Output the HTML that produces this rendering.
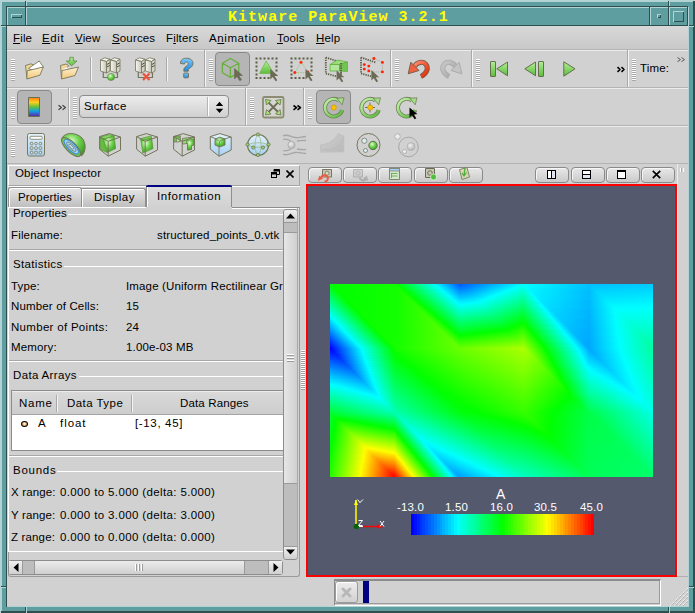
<!DOCTYPE html>
<html><head><meta charset="utf-8">
<style>
*{margin:0;padding:0;box-sizing:border-box}
html,body{width:695px;height:613px;overflow:hidden;background:#5f9ea0}
body{position:relative;font-family:"Liberation Sans",sans-serif;font-size:11.5px;letter-spacing:0.15px;color:#000}
.a{position:absolute}
.lt{background:#b3d2d3}
.dk{background:#2f4f4f}
.tl{background:#5f9ea0}
.t{position:absolute;white-space:nowrap;line-height:1}
.hd{position:absolute;width:4px;background:repeating-linear-gradient(to bottom,#fff 0,#fff 1px,#a8a8a8 1px,#a8a8a8 2px)}
.vs{position:absolute;width:2px;border-left:1px solid #a9a9a9;border-right:1px solid #f4f4f4}
.vb{position:absolute;top:167px;width:34px;height:16px;border:1px solid #8a8a8a;border-radius:4px;background:linear-gradient(#e8e8e8,#cacaca);box-shadow:inset 1px 1px 0 #f6f6f6}
.tb{position:absolute;border:1px solid #8a8a8a;border-radius:4px;background:#b5b5b5}
#fld i{position:absolute;left:0;width:323px;display:block}
</style></head><body>
<!-- window frame -->
<div class="a lt" style="left:0;top:0;width:695px;height:2px"></div>
<div class="a lt" style="left:0;top:0;width:2px;height:613px"></div>
<div class="a dk" style="left:693px;top:1px;width:2px;height:612px"></div>
<div class="a dk" style="left:1px;top:611px;width:694px;height:2px"></div>
<!-- corner separators -->
<div class="a dk" style="left:25px;top:1px;width:1px;height:6px"></div>
<div class="a lt" style="left:26px;top:0;width:1px;height:7px"></div>
<div class="a dk" style="left:668px;top:1px;width:1px;height:6px"></div>
<div class="a lt" style="left:669px;top:0;width:1px;height:7px"></div>
<div class="a dk" style="left:1px;top:25px;width:6px;height:1px"></div>
<div class="a lt" style="left:0;top:26px;width:7px;height:1px"></div>
<div class="a dk" style="left:688px;top:25px;width:6px;height:1px"></div>
<div class="a lt" style="left:688px;top:26px;width:6px;height:1px"></div>
<div class="a dk" style="left:1px;top:586px;width:6px;height:1px"></div>
<div class="a lt" style="left:0;top:587px;width:7px;height:1px"></div>
<div class="a dk" style="left:688px;top:586px;width:6px;height:1px"></div>
<div class="a lt" style="left:688px;top:587px;width:6px;height:1px"></div>
<div class="a dk" style="left:25px;top:606px;width:1px;height:6px"></div>
<div class="a lt" style="left:26px;top:606px;width:1px;height:7px"></div>
<div class="a dk" style="left:668px;top:606px;width:1px;height:6px"></div>
<div class="a lt" style="left:669px;top:606px;width:1px;height:7px"></div>
<!-- inner bevel -->
<div class="a dk" style="left:6px;top:6px;width:682px;height:1px"></div>
<div class="a dk" style="left:6px;top:6px;width:1px;height:601px"></div>
<div class="a lt" style="left:688px;top:7px;width:1px;height:600px"></div>
<div class="a lt" style="left:7px;top:606px;width:682px;height:1px"></div>
<!-- title bar -->
<div class="a lt" style="left:7px;top:7px;width:681px;height:1px"></div>
<div class="a lt" style="left:7px;top:7px;width:1px;height:19px"></div>
<div class="a dk" style="left:7px;top:25px;width:681px;height:1px"></div>
<div class="a dk" style="left:687px;top:7px;width:1px;height:19px"></div>
<div class="a dk" style="left:25px;top:7px;width:1px;height:18px"></div>
<div class="a lt" style="left:26px;top:7px;width:1px;height:18px"></div>
<div class="a dk" style="left:649px;top:7px;width:1px;height:18px"></div>
<div class="a lt" style="left:650px;top:7px;width:1px;height:18px"></div>
<div class="a dk" style="left:668px;top:7px;width:1px;height:18px"></div>
<div class="a lt" style="left:669px;top:7px;width:1px;height:18px"></div>
<!-- window menu icon -->
<div class="a lt" style="left:11px;top:14px;width:11px;height:4px"></div>
<div class="a dk" style="left:12px;top:15px;width:10px;height:3px"></div>
<div class="a tl" style="left:12px;top:15px;width:9px;height:2px"></div>
<!-- minimize icon -->
<div class="a lt" style="left:657px;top:14px;width:4px;height:4px"></div>
<div class="a dk" style="left:658px;top:15px;width:3px;height:3px"></div>
<div class="a tl" style="left:658px;top:15px;width:2px;height:2px"></div>
<!-- maximize icon -->
<div class="a lt" style="left:673px;top:11px;width:11px;height:11px"></div>
<div class="a dk" style="left:674px;top:12px;width:10px;height:10px"></div>
<div class="a tl" style="left:674px;top:12px;width:9px;height:9px"></div>
<div class="t" style="left:228px;top:10px;font-family:'Liberation Mono',monospace;font-weight:bold;font-size:15px;letter-spacing:1.03px;color:#ffff00">Kitware ParaView 3.2.1</div>

<!-- client area -->
<div class="a" id="client" style="left:7px;top:26px;width:681px;height:580px;background:#d1d1d1"></div>


<!-- menubar -->
<div class="a" style="left:7px;top:26px;width:681px;height:23px;background:linear-gradient(#d8d8d8,#c8c8c8)"></div>
<div class="a" style="left:7px;top:49px;width:681px;height:1px;background:#b4b4b4"></div>
<div class="a" style="left:7px;top:50px;width:681px;height:1px;background:#ececec"></div>
<div class="t" style="left:13px;top:33px"><u>F</u>ile</div>
<div class="t" style="left:42px;top:33px;letter-spacing:0.6px"><u>E</u>dit</div>
<div class="t" style="left:75px;top:33px"><u>V</u>iew</div>
<div class="t" style="left:112px;top:33px"><u>S</u>ources</div>
<div class="t" style="left:166px;top:33px">F<u>i</u>lters</div>
<div class="t" style="left:209px;top:33px;letter-spacing:0.6px">A<u>n</u>imation</div>
<div class="t" style="left:277px;top:33px"><u>T</u>ools</div>
<div class="t" style="left:316px;top:33px"><u>H</u>elp</div>
<!-- toolbar row separators -->
<div class="a" style="left:7px;top:87px;width:681px;height:1px;background:#b4b4b4"></div>
<div class="a" style="left:7px;top:88px;width:681px;height:1px;background:#ececec"></div>
<div class="a" style="left:7px;top:125px;width:681px;height:1px;background:#b4b4b4"></div>
<div class="a" style="left:7px;top:126px;width:681px;height:1px;background:#ececec"></div>
<div class="a" style="left:7px;top:163px;width:681px;height:1px;background:#b4b4b4"></div>
<!-- toolbar boundaries row1 -->
<div class="vs" style="left:204px;top:50px;height:37px"></div>
<div class="vs" style="left:390px;top:50px;height:37px"></div>
<div class="vs" style="left:471px;top:50px;height:37px"></div>
<div class="vs" style="left:627px;top:50px;height:37px"></div>
<div class="hd" style="left:11px;top:59px;height:22px"></div>
<div class="hd" style="left:209px;top:59px;height:22px"></div>
<div class="hd" style="left:395px;top:59px;height:22px"></div>
<div class="hd" style="left:476px;top:59px;height:22px"></div>
<div class="hd" style="left:632px;top:59px;height:22px"></div>
<div class="vs" style="left:90px;top:57px;height:24px"></div>
<div class="vs" style="left:166px;top:57px;height:24px"></div>
<div class="tb" style="left:215px;top:52px;width:35px;height:34px"></div>
<div class="t" style="left:640px;top:63px">Time:</div>
<!-- row2 -->
<div class="vs" style="left:68px;top:88px;height:37px"></div>
<div class="vs" style="left:245px;top:88px;height:37px"></div>
<div class="vs" style="left:303px;top:88px;height:37px"></div>
<div class="hd" style="left:11px;top:97px;height:22px"></div>
<div class="hd" style="left:73px;top:97px;height:22px"></div>
<div class="hd" style="left:250px;top:97px;height:22px"></div>
<div class="hd" style="left:308px;top:97px;height:22px"></div>
<div class="tb" style="left:17px;top:90px;width:35px;height:34px"></div>
<div class="tb" style="left:316px;top:90px;width:35px;height:34px"></div>
<div class="a" style="left:79px;top:95px;width:150px;height:23px;border:1px solid #8c8c8c;border-radius:4px;background:linear-gradient(#ececec,#d0d0d0)"></div>
<div class="t" style="left:84px;top:101px;letter-spacing:0.45px">Surface</div>
<div class="a" style="left:207px;top:97px;width:1px;height:19px;background:#b4b4b4"></div><div class="a" style="left:208px;top:97px;width:1px;height:19px;background:#fff"></div>
<!-- row3 -->
<div class="hd" style="left:11px;top:135px;height:22px"></div>

<!-- object inspector -->



<!-- ===== object inspector ===== -->
<div class="a" style="left:8px;top:165px;width:292px;height:21px;border-top:1px solid #fff;border-left:1px solid #fff;border-right:1px solid #a4a4a4;border-bottom:1px solid #a4a4a4"></div>
<div class="a" style="left:8px;top:186px;width:292px;height:1px;background:#fff"></div>
<div class="t" style="left:15px;top:168px">Object Inspector</div>
<svg class="a" style="left:271px;top:169px" width="9" height="9" viewBox="0 0 9 9"><path d="M3 0.5h5.5v5h-2.5M3 0.5v2" fill="none" stroke="#000" stroke-width="1"/><path d="M3 1.5h5.5" stroke="#000" stroke-width="2"/><rect x="0.5" y="3.5" width="5" height="5" fill="none" stroke="#000"/><path d="M0.5 4.5h5" stroke="#000" stroke-width="2"/></svg>
<svg class="a" style="left:286px;top:170px" width="8" height="8" viewBox="0 0 8 8"><path d="M0.5 0.5L7.5 7.5M7.5 0.5L0.5 7.5" stroke="#000" stroke-width="1.6"/></svg>
<!-- tabs -->
<div class="a" style="left:8px;top:187px;width:74px;height:21px;border:1px solid #8e8e8e;border-bottom:none;border-radius:3px 3px 0 0;background:linear-gradient(#e4e4e4,#bdbdbd);box-shadow:inset 1px 1px 0 #fff"></div>
<div class="a" style="left:82px;top:188px;width:64px;height:20px;border:1px solid #8e8e8e;border-bottom:none;border-left:none;border-radius:0 3px 0 0;background:linear-gradient(#e4e4e4,#bdbdbd);box-shadow:inset 1px 1px 0 #fff"></div>
<div class="a" style="left:146px;top:185px;width:86px;height:23px;border:1px solid #8e8e8e;border-top:none;border-bottom:none;background:linear-gradient(#dedede,#d1d1d1);box-shadow:inset 1px 0 0 #fff"></div>
<div class="a" style="left:146px;top:185px;width:86px;height:2px;background:#000080;border-radius:2px 2px 0 0"></div>
<div class="t" style="left:18px;top:192px">Properties</div>
<div class="t" style="left:94px;top:192px;letter-spacing:0.45px">Display</div>
<div class="t" style="left:157px;top:191px;letter-spacing:0.6px">Information</div>
<!-- tab pane -->
<div class="a" style="left:8px;top:207px;width:292px;height:370px;border:1px solid #9a9a9a;border-top:1px solid #fff;border-radius:0 0 3px 3px"></div>
<div class="a" style="left:146px;top:207px;width:86px;height:1px;background:#d1d1d1"></div>
<div class="a" style="left:8px;top:207px;width:1px;height:345px;background:#fff"></div>
<div class="a" style="left:232px;top:207px;width:68px;height:1px;background:#8e8e8e"></div>
<div class="a" style="left:232px;top:208px;width:67px;height:1px;background:#fff"></div>
<!-- scroll content -->
<div class="t" style="left:13px;top:208px">Properties</div>
<div class="a" style="left:68px;top:214px;width:215px;height:1px;background:#fff"></div>
<div class="t" style="left:11px;top:230px">Filename:</div>
<div class="t" style="left:157px;top:230px">structured_points_0.vtk</div>
<div class="a" style="left:9px;top:249px;width:274px;height:1px;background:#a8a8a8"></div>
<div class="a" style="left:9px;top:250px;width:274px;height:1px;background:#fff"></div>
<div class="t" style="left:13px;top:259px;letter-spacing:0.35px">Statistics</div>
<div class="a" style="left:64px;top:266px;width:219px;height:1px;background:#fff"></div>
<div class="t" style="left:11px;top:281px">Type:</div>
<div class="a" style="left:126px;top:270px;width:157px;height:30px;overflow:hidden"><div class="t" style="left:0;top:11px">Image (Uniform Rectilinear Grid)</div></div>
<div class="t" style="left:11px;top:301px">Number of Cells:</div>
<div class="t" style="left:126px;top:301px">15</div>
<div class="t" style="left:11px;top:322px;letter-spacing:0.3px">Number of Points:</div>
<div class="t" style="left:126px;top:322px">24</div>
<div class="t" style="left:11px;top:342px">Memory:</div>
<div class="t" style="left:126px;top:342px">1.00e-03 MB</div>
<div class="a" style="left:9px;top:360px;width:274px;height:1px;background:#a8a8a8"></div>
<div class="a" style="left:9px;top:361px;width:274px;height:1px;background:#fff"></div>
<div class="t" style="left:13px;top:370px;letter-spacing:0.35px">Data Arrays</div>
<div class="a" style="left:79px;top:376px;width:204px;height:1px;background:#fff"></div>
<!-- table -->
<div class="a" style="left:11px;top:390px;width:273px;height:61px;border:1px solid #8c8c8c;border-right:none;background:#fff"></div>
<div class="a" style="left:12px;top:391px;width:271px;height:24px;background:linear-gradient(#dadada,#cdcdcd);border-bottom:1px solid #a4a4a4;box-shadow:inset 0 1px 0 #ececec"></div>
<div class="a" style="left:56px;top:395px;width:1px;height:17px;background:#a8a8a8"></div>
<div class="a" style="left:57px;top:395px;width:1px;height:17px;background:#f4f4f4"></div>
<div class="a" style="left:131px;top:395px;width:1px;height:17px;background:#a8a8a8"></div>
<div class="a" style="left:132px;top:395px;width:1px;height:17px;background:#f4f4f4"></div>
<div class="t" style="left:19px;top:398px;letter-spacing:0.75px">Name</div>
<div class="t" style="left:67px;top:398px;letter-spacing:0.45px">Data Type</div>
<div class="t" style="left:180px;top:398px">Data Ranges</div>
<div class="a" style="left:21px;top:421px;width:7px;height:6px;border-radius:50%;background:radial-gradient(circle at 50% 45%,#fff 0,#fff 0.6px,#f8c080 1.2px,#e89040 100%);border:1px solid #000"></div>
<div class="t" style="left:38px;top:418px">A</div>
<div class="t" style="left:60px;top:418px;letter-spacing:0.95px">float</div>
<div class="t" style="left:135px;top:418px;letter-spacing:0.65px">[-13, 45]</div>
<div class="a" style="left:9px;top:455px;width:274px;height:1px;background:#a8a8a8"></div>
<div class="a" style="left:9px;top:456px;width:274px;height:1px;background:#fff"></div>
<div class="t" style="left:13px;top:465px;letter-spacing:0.75px">Bounds</div>
<div class="a" style="left:57px;top:471px;width:226px;height:1px;background:#fff"></div>
<div class="t" style="left:11px;top:487px">X range:</div>
<div class="t" style="left:60px;top:487px;letter-spacing:0.37px">0.000 to 5.000 (delta: 5.000)</div>
<div class="t" style="left:11px;top:510px">Y range:</div>
<div class="t" style="left:60px;top:510px;letter-spacing:0.37px">0.000 to 3.000 (delta: 3.000)</div>
<div class="t" style="left:11px;top:532px">Z range:</div>
<div class="t" style="left:60px;top:532px;letter-spacing:0.37px">0.000 to 0.000 (delta: 0.000)</div>
<div class="a" style="left:9px;top:551px;width:274px;height:1px;background:#fff"></div>
<!-- v scrollbar -->
<div class="a" style="left:283px;top:209px;width:15px;height:351px;border:1px solid #8c8c8c;border-radius:3px;background:#bdbdbd"></div>
<div class="a" style="left:284px;top:210px;width:13px;height:13px;background:linear-gradient(#f0f0f0,#d0d0d0);border-bottom:1px solid #9a9a9a;border-radius:2px 2px 0 0"></div>
<div class="a" style="left:284px;top:232px;width:13px;height:252px;background:linear-gradient(90deg,#e6e6e6,#cfcfcf);border-top:1px solid #9a9a9a;border-bottom:1px solid #9a9a9a"></div>
<div class="a" style="left:284px;top:546px;width:13px;height:13px;background:linear-gradient(#f0f0f0,#d0d0d0);border-top:1px solid #9a9a9a;border-radius:0 0 2px 2px"></div>
<svg class="a" style="left:286px;top:213px" width="9" height="6"><path d="M0 5.5L4.5 0.5L9 5.5Z" fill="#000"/></svg>
<svg class="a" style="left:286px;top:549px" width="9" height="6"><path d="M0 0.5L4.5 5.5L9 0.5Z" fill="#000"/></svg>
<div class="a" style="left:287px;top:354px;width:7px;height:9px;background:repeating-linear-gradient(#fff 0,#fff 1px,#9a9a9a 1px,#9a9a9a 2px,transparent 2px,transparent 3px)"></div>
<!-- h scrollbar -->
<div class="a" style="left:8px;top:560px;width:275px;height:15px;border:1px solid #8c8c8c;border-radius:3px;background:#bdbdbd"></div>
<div class="a" style="left:9px;top:561px;width:14px;height:13px;background:linear-gradient(#f0f0f0,#d0d0d0);border-right:1px solid #9a9a9a"></div>
<div class="a" style="left:34px;top:561px;width:211px;height:13px;background:linear-gradient(#ececec,#cfcfcf);border-left:1px solid #9a9a9a;border-right:1px solid #9a9a9a"></div>
<div class="a" style="left:268px;top:561px;width:14px;height:13px;background:linear-gradient(#f0f0f0,#d0d0d0);border-left:1px solid #9a9a9a"></div>
<svg class="a" style="left:13px;top:563px" width="6" height="9"><path d="M5.5 0L0.5 4.5L5.5 9Z" fill="#000"/></svg>
<svg class="a" style="left:273px;top:563px" width="6" height="9"><path d="M0.5 0L5.5 4.5L0.5 9Z" fill="#000"/></svg>
<div class="a" style="left:135px;top:564px;width:9px;height:7px;background:repeating-linear-gradient(90deg,#fff 0,#fff 1px,#9a9a9a 1px,#9a9a9a 2px,transparent 2px,transparent 3px)"></div>


<!-- view toolbar buttons -->
<div class="vb" style="left:308px"></div>
<div class="vb" style="left:343px"></div>
<div class="vb" style="left:378px"></div>
<div class="vb" style="left:414px"></div>
<div class="vb" style="left:449px"></div>
<div class="vb" style="left:535px"></div>
<div class="vb" style="left:571px"></div>
<div class="vb" style="left:606px"></div>
<div class="vb" style="left:641px"></div>
<!-- split icons -->
<div class="a" style="left:547px;top:170px;width:9px;height:9px;border:1px solid #000;background:linear-gradient(90deg,#fff 0,#fff 3px,#000 3px,#000 4px,#dfe7f5 4px)"></div>
<div class="a" style="left:582px;top:170px;width:9px;height:9px;border:1px solid #000;background:linear-gradient(#fff 0,#fff 3px,#000 3px,#000 4px,#dfe7f5 4px)"></div>
<div class="a" style="left:617px;top:170px;width:9px;height:9px;border:1px solid #000;border-top:2px solid #000;background:#fff"></div>
<svg class="a" style="left:652px;top:170px" width="9" height="9"><path d="M0.8 0.8L8.2 8.2M8.2 0.8L0.8 8.2" stroke="#000" stroke-width="1.7"/></svg>
<!-- right dock strip -->
<div class="a" style="left:677px;top:164px;width:1px;height:412px;background:#ececec"></div>
<div class="a" style="left:677px;top:576px;width:11px;height:1px;background:#b0b0b0"></div>
<div class="a" style="left:680px;top:168px;width:4px;height:4px;background:repeating-linear-gradient(90deg,#fff 0,#fff 1px,#a8a8a8 1px,#a8a8a8 2px,transparent 2px,transparent 3px)"></div>
<!-- status bar -->
<div class="a" style="left:334px;top:579px;width:327px;height:27px;border-top:2px solid #8c8c8c;border-left:1px solid #8c8c8c;border-right:1px solid #fff;border-bottom:1px solid #fff"></div>
<div class="a" style="left:659px;top:581px;width:1px;height:23px;background:#9a9a9a"></div>
<div class="a" style="left:335px;top:603px;width:324px;height:1px;background:#9a9a9a"></div>
<div class="a" style="left:335px;top:581px;width:23px;height:22px;border:1px solid #9a9a9a;border-radius:3px;background:linear-gradient(#ececec,#d2d2d2);box-shadow:inset 1px 1px 0 #fff"></div>
<svg class="a" style="left:341px;top:587px" width="11" height="11"><path d="M2 2L9 9M9 2L2 9" stroke="#b8b8b8" stroke-width="3" stroke-linecap="round"/></svg>
<div class="a" style="left:363px;top:581px;width:6px;height:22px;background:#000080"></div>
<!-- size grip -->
<svg class="a" style="left:669px;top:587px" width="19" height="19"><g stroke-dasharray="1 1"><path d="M19 1L1 19M19 5L5 19M19 9L9 19M19 13L13 19" stroke="#fff" stroke-width="1"/><path d="M19 2L2 19M19 6L6 19M19 10L10 19M19 14L14 19" stroke="#a0a0a0" stroke-width="1"/></g></svg>

<!--ICONS--><svg class="a" style="left:0;top:0" width="695" height="613" viewBox="0 0 695 613">
<defs>
<linearGradient id="gF" x1="0" y1="0" x2="0" y2="1"><stop offset="0" stop-color="#fdf0d0"/><stop offset="1" stop-color="#f4c878"/></linearGradient>
<linearGradient id="gG" x1="0" y1="0" x2="1" y2="1"><stop offset="0" stop-color="#c6f4ad"/><stop offset="1" stop-color="#58b83a"/></linearGradient>
<linearGradient id="gGv" x1="0" y1="0" x2="0" y2="1"><stop offset="0" stop-color="#b4ee98"/><stop offset="1" stop-color="#5cbc3c"/></linearGradient>
<linearGradient id="gS" x1="0" y1="0" x2="1" y2="0"><stop offset="0" stop-color="#f8f8f2"/><stop offset="1" stop-color="#c4c4b4"/></linearGradient>
<linearGradient id="gB" x1="0" y1="0" x2="0" y2="1"><stop offset="0" stop-color="#7cc8f8"/><stop offset="1" stop-color="#1e8ae6"/></linearGradient>
<linearGradient id="gR" x1="0" y1="0" x2="1" y2="1"><stop offset="0" stop-color="#ff8a70"/><stop offset="1" stop-color="#e02a00"/></linearGradient>
<linearGradient id="gGr" x1="0" y1="0" x2="1" y2="1"><stop offset="0" stop-color="#c8c8c8"/><stop offset="1" stop-color="#a4a4a4"/></linearGradient>
<linearGradient id="gBl" x1="0" y1="0" x2="0" y2="1"><stop offset="0" stop-color="#e4f2fc"/><stop offset="1" stop-color="#a6d0f2"/></linearGradient>
<linearGradient id="gCm" x1="0" y1="0" x2="0" y2="1"><stop offset="0" stop-color="#ff7a10"/><stop offset="0.25" stop-color="#ffd020"/><stop offset="0.5" stop-color="#60c040"/><stop offset="0.72" stop-color="#10a0e8"/><stop offset="1" stop-color="#6020a0"/></linearGradient>
<radialGradient id="rG" cx="0.4" cy="0.35" r="0.7"><stop offset="0" stop-color="#e0ffd0"/><stop offset="0.5" stop-color="#6cd04a"/><stop offset="1" stop-color="#3c9a28"/></radialGradient>
<radialGradient id="rGr" cx="0.4" cy="0.35" r="0.7"><stop offset="0" stop-color="#f0f0f0"/><stop offset="1" stop-color="#b0b0b0"/></radialGradient>
</defs>
<g stroke-linejoin="round">
<!-- open folder -->
<path d="M25.5 65.5L31 63.8L33.5 65L27 78.5Z" fill="#f0d49a" stroke="#78785a" stroke-width="0.9"/>
<path d="M28.5 68.5L39.2 61L43.5 67.2L33 70.5Z" fill="#fff" stroke="#78785a" stroke-width="0.9"/>
<path d="M27.2 70.8L43.2 67L40 75.2L26.8 79Z" fill="url(#gF)" stroke="#78785a" stroke-width="0.9"/>
<!-- folder with arrow -->
<path d="M60.5 65.5L66 64L68.5 65.5L61.5 78.5Z" fill="#f0d49a" stroke="#78785a" stroke-width="0.9"/>
<path d="M62.5 69L69 67L63 74Z" fill="#fff"/>
<path d="M62 70.5L78.5 67L75 75.5L61.5 79Z" fill="url(#gF)" stroke="#78785a" stroke-width="0.9"/>
<path d="M69.8 57.3H73.4V61H77L71.6 65.8L66.2 61H69.8Z" fill="url(#gGv)" stroke="#5e8a48" stroke-width="0.8"/>
<!-- servers -->
<g id="srv">
<path d="M100.5 60L104.5 57.8L110 59.2L106.5 61.5Z" fill="#f4f4ee" stroke="#74745c" stroke-width="0.8"/>
<path d="M100.5 60L106.5 61.5V73L100.5 71Z" fill="url(#gS)" stroke="#74745c" stroke-width="0.8"/>
<path d="M106.5 61.5L110 59.2V71L106.5 73Z" fill="#d4d4c8" stroke="#74745c" stroke-width="0.8"/>
<path d="M106.8 64.5L109.6 63M106.8 67L109.6 65.5" stroke="#4a4a40" stroke-width="1"/>
<path d="M110.5 60L114.5 57.8L120 59.2L116.5 61.5Z" fill="#f4f4ee" stroke="#74745c" stroke-width="0.8"/>
<path d="M110.5 60L116.5 61.5V73L110.5 71Z" fill="url(#gS)" stroke="#74745c" stroke-width="0.8"/>
<path d="M116.5 61.5L120 59.2V71L116.5 73Z" fill="#d4d4c8" stroke="#74745c" stroke-width="0.8"/>
<path d="M116.8 64.5L119.6 63M116.8 67L119.6 65.5" stroke="#4a4a40" stroke-width="1"/>
<path d="M103.3 72V77.5H117.5V72.5" fill="none" stroke="#74745c" stroke-width="1.2"/>
</g>
<circle cx="111" cy="77" r="3.6" fill="url(#rG)" stroke="#6a8a55" stroke-width="0.6"/>
<use href="#srv" x="35"/>
<path d="M143 73.5L149.5 80M149.5 73.5L143 80" stroke="#e8553a" stroke-width="2.2"/>
<!-- separators -->
<!-- help -->
<path d="M180.5 63.5C180.5 59.5 183.5 58.2 186.5 58.2C190.5 58.2 193 60.5 193 63.5C193 66.5 190.5 67.5 189 68.5C188.3 69 188.3 70 188.3 71.2H183.8C183.8 69 184 67.8 185.8 66.5C187.3 65.5 188.2 65 188.2 63.7C188.2 62.6 187.4 62 186.3 62C185 62 184.5 62.8 184.5 64Z" fill="url(#gB)" stroke="#6e6e55" stroke-width="0.9"/>
<rect x="183.7" y="73" width="4.8" height="4.8" rx="0.8" fill="url(#gB)" stroke="#6e6e55" stroke-width="0.9"/>
<!-- cube in checked button -->
<path d="M230.4 58.5L238.8 63.2V72.7L230.4 77.4L222.4 72.7V63.2Z M222.4 63.2L230.4 67.8L238.8 63.2 M230.4 67.8V77.4" fill="none" stroke="#68b03c" stroke-width="1.3"/>
<path d="M234.5 68.5L234.5 79L237 76.5L239.8 80.8L241.5 79.8L238.8 75.5L242.5 75.5Z" fill="#6a6a55" stroke="#6a6a55" stroke-width="0.6"/>
<!-- select cells -->
<g fill="#5c5c48">
<path d="M255.5 57.5h2v2h-2zM259.5 57.5h2v2h-2zM263.5 57.5h2v2h-2zM267.5 57.5h2v2h-2zM271.5 57.5h2v2h-2zM275.5 57.5h2v2h-2z"/>
<path d="M255.5 77h2v2h-2zM259.5 77h2v2h-2zM263.5 77h2v2h-2zM267.5 77h2v2h-2z"/>
<path d="M255.5 61.5h2v2h-2zM255.5 65.5h2v2h-2zM255.5 69.5h2v2h-2zM255.5 73.5h2v2h-2zM275.5 61.5h2v2h-2zM275.5 65.5h2v2h-2zM275.5 69.5h2v2h-2z"/>
</g>
<path d="M266.2 61L273.8 73.5H259.5Z" fill="url(#gGv)" stroke="#6cba48" stroke-width="0.8"/>
<path d="M270.3 71L270.3 81.5L272.8 79L275.6 83.3L277.3 82.3L274.6 78L278.3 78Z" fill="#6a6a55" transform="translate(0,-2)"/>
<!-- select points -->
<g fill="#5c5c48">
<path d="M290.5 57.5h2v2h-2zM294.5 57.5h2v2h-2zM298.5 57.5h2v2h-2zM302.5 57.5h2v2h-2zM306.5 57.5h2v2h-2zM310.5 57.5h2v2h-2z"/>
<path d="M290.5 77h2v2h-2zM294.5 77h2v2h-2zM298.5 77h2v2h-2zM302.5 77h2v2h-2z"/>
<path d="M290.5 61.5h2v2h-2zM290.5 65.5h2v2h-2zM290.5 69.5h2v2h-2zM290.5 73.5h2v2h-2zM310.5 61.5h2v2h-2zM310.5 65.5h2v2h-2zM310.5 69.5h2v2h-2z"/>
</g>
<path d="M301 62.2L308 72M301 62.2L294.8 72.6H308" fill="none" stroke="#8cc070" stroke-width="0.8" stroke-dasharray="1.5 1"/>
<circle cx="301" cy="62.2" r="1.5" fill="#ff2a00"/><circle cx="294.8" cy="72.6" r="1.5" fill="#ff2a00"/><circle cx="307.9" cy="72" r="1.5" fill="#ff2a00"/>
<path d="M305.5 69L305.5 79.5L308 77L310.8 81.3L312.5 80.3L309.8 76L313.5 76Z" fill="#6a6a55"/>
<!-- frustum cells -->
<g fill="none" stroke="#5c5c48" stroke-width="1.8" stroke-dasharray="1.3 1">
<path d="M325.8 57.5V73.5M325.8 57.5L341 62.5M325.8 73.5L341 77.5M341 63V76"/>
</g>
<path d="M330 64.5L339.5 64.5L339.5 71L330 71Z" fill="#b2e69a" stroke="#62b040" stroke-width="0.8"/>
<path d="M330 64.5L337.5 60L347.5 62L339.5 64.5Z" fill="#9adc7a" stroke="#62b040" stroke-width="0.8"/>
<path d="M339.5 64.5L347.5 62V71.5L339.5 71Z" fill="#72c450" stroke="#62b040" stroke-width="0.8"/>
<path d="M341 63V76" fill="none" stroke="#5c5c48" stroke-width="1.8" stroke-dasharray="1.3 1"/>
<path d="M336.6 70.5L336.6 80.5L339 78.2L341.6 82.3L343.3 81.3L340.7 77.2L344.3 77.2Z" fill="#6a6a55"/>
<!-- frustum points -->
<g fill="none" stroke="#5c5c48" stroke-width="1.8" stroke-dasharray="1.3 1">
<path d="M361 57.5V73.5M361 57.5L376 62.5M361 73.5L376 77.5"/>
</g>
<path d="M368.8 66.1L373.9 58.5L382.4 62.4V71.9L371 72" fill="none" stroke="#9a9a8a" stroke-width="0.7" stroke-dasharray="1.2 1.2"/>
<g fill="#ff2200"><circle cx="364.3" cy="64.6" r="1.45"/><circle cx="368.8" cy="66.1" r="1.45"/><circle cx="364.3" cy="69.1" r="1.45"/><circle cx="368.8" cy="70.9" r="1.45"/><circle cx="373.9" cy="58.5" r="1.45"/><circle cx="382.4" cy="62.4" r="1.45"/><circle cx="382.4" cy="71.9" r="1.45"/></g>
<path d="M371.4 70L371.4 80.5L373.8 78.2L376.4 82.3L378.1 81.3L375.5 77.2L379.1 77.2Z" fill="#6a6a55"/>
<!-- undo -->
<path d="M414.5 66.5C417 62 422.5 61 425.5 64C428.8 67.3 427.5 73.5 421 76.5" fill="none" stroke="#6e5a48" stroke-width="5"/>
<path d="M414.5 66.5C417 62 422.5 61 425.5 64C428.8 67.3 427.5 73.5 421 76.5" fill="none" stroke="url(#gR)" stroke-width="3.4"/>
<path d="M408.2 73.8L410.8 62.2L419 70.5Z" fill="#f0603e" stroke="#6e5a48" stroke-width="0.9"/>
<!-- redo (disabled) -->
<path d="M455.5 66.5C453 62 447.5 61 444.5 64C441.2 67.3 442.5 73.5 449 76.5" fill="none" stroke="#a8a8a8" stroke-width="5"/>
<path d="M455.5 66.5C453 62 447.5 61 444.5 64C441.2 67.3 442.5 73.5 449 76.5" fill="none" stroke="url(#gGr)" stroke-width="3.4"/>
<path d="M461.8 73.8L459.2 62.2L451 70.5Z" fill="#c4c4c4" stroke="#a8a8a8" stroke-width="0.9"/>
<!-- vcr -->
<g fill="url(#gGv)" stroke="#5e6446" stroke-width="0.9">
<rect x="490.5" y="61.5" width="5" height="15" rx="0.5"/>
<path d="M496.8 68.8L507.5 62V75.8Z"/>
<path d="M524.8 68.8L535.5 62V75.8Z"/>
<rect x="538.5" y="61.5" width="5" height="15" rx="0.5"/>
<path d="M563.8 61.8L575 68.8L563.8 76.2Z"/>
</g>
<!-- chevrons -->
<path d="M617.5 67.2L620 69.5L617.5 71.8M621.5 67.2L624 69.5L621.5 71.8" fill="none" stroke="#000" stroke-width="1.6"/>
<path d="M677.5 57.5L680.5 59.6L677.5 61.7M681.5 57.5L684.5 59.6L681.5 61.7" fill="none" stroke="#555" stroke-width="1"/>
<!-- row2: colormap -->
<rect x="28.5" y="97.5" width="11" height="19" fill="url(#gCm)" stroke="#6e6e50" stroke-width="1"/>
<path d="M58.5 105.3L61.5 107.5L58.5 109.7M62.5 105.3L65.5 107.5L62.5 109.7" fill="none" stroke="#444" stroke-width="1.2"/>
<!-- combo arrows -->
<path d="M215.8 106L219.5 101.8L223.2 106Z M215.8 108.8L219.5 113L223.2 108.8Z" fill="#000"/>
<!-- reset camera -->
<rect x="263" y="97" width="20.5" height="20.5" rx="1.5" fill="#d6d6d0" stroke="#8c8c74" stroke-width="1.8"/>
<path d="M267 101L279.5 113.5M279.5 101L267 113.5" stroke="#6e6e58" stroke-width="1.8"/>
<g fill="#a2e070" stroke="#5e6446" stroke-width="0.7">
<path d="M265.5 99.5L271 100.5L266.5 105Z"/><path d="M281 99.5L280 105L275.5 100.5Z"/>
<path d="M265.5 115L266.5 109.5L271 114Z"/><path d="M281 115L275.5 114L280 109.5Z"/>
</g>
<path d="M293.5 105.5L296.5 107.7L293.5 109.9M297.5 105.5L300.5 107.7L297.5 109.9" fill="none" stroke="#000" stroke-width="1.6"/>
<!-- rotation center icons -->
<g id="rot">
<path d="M338.8 100.5A8.8 8.8 0 1 0 342.2 110" fill="none" stroke="#74805a" stroke-width="4"/>
<path d="M338.8 100.5A8.8 8.8 0 1 0 342.2 110" fill="none" stroke="url(#gG)" stroke-width="2.4"/>
<path d="M336.8 98.2L344 97.8L342.2 104.8Z" fill="#a4dc8a" stroke="#74805a" stroke-width="0.8"/>
</g>
<circle cx="333.8" cy="107.5" r="2.6" fill="#f8c000" stroke="#c89000" stroke-width="0.6"/>
<use href="#rot" x="36.5"/>
<path d="M365 107.5H375M370 102.5V112.5" stroke="#707060" stroke-width="1"/>
<circle cx="370.3" cy="107.5" r="2.6" fill="#f8c000" stroke="#c89000" stroke-width="0.6"/>
<use href="#rot" x="73"/>
<path d="M409.5 107.5L409.5 117.5L412 115.2L414.6 119.3L416.3 118.3L413.7 114.2L417.5 114.2Z" fill="#000"/>
<!-- row3 -->
<rect x="27.5" y="133.5" width="17" height="22.5" rx="2" fill="url(#gBl)" stroke="#78785e" stroke-width="1"/>
<rect x="30" y="136.3" width="12.2" height="3" rx="1" fill="#fff" stroke="#78785e" stroke-width="0.8"/>
<g fill="#cfe4f4" stroke="#78785e" stroke-width="0.8">
<rect x="30.3" y="142.3" width="2.6" height="2.6" rx="0.5"/><rect x="34.7" y="142.3" width="2.6" height="2.6" rx="1.3"/><rect x="39.1" y="142.3" width="2.6" height="2.6" rx="0.5"/>
<rect x="30.3" y="146.8" width="2.6" height="2.6" rx="0.5"/><rect x="34.7" y="146.8" width="2.6" height="2.6" rx="0.5"/><rect x="39.1" y="146.8" width="2.6" height="2.6" rx="0.5"/>
<rect x="30.3" y="151.3" width="2.6" height="2.6" rx="0.5"/><rect x="34.7" y="151.3" width="2.6" height="2.6" rx="0.5"/><rect x="39.1" y="151.3" width="2.6" height="2.6" rx="0.5"/>
</g>
<!-- contour -->
<path d="M62 138C65 132 76 132 82 138C86.5 143 86 152 81.5 156Z" fill="url(#rG)" stroke="#74745c" stroke-width="1"/>
<ellipse cx="71" cy="147" rx="12.5" ry="5" transform="rotate(45 71 147)" fill="#6cc848" stroke="#74745c" stroke-width="1"/>
<ellipse cx="71.3" cy="146.7" rx="9.5" ry="3.7" transform="rotate(45 71.3 146.7)" fill="#a8d4f6" stroke="#3a8ad8" stroke-width="1"/>
<ellipse cx="71.3" cy="146.7" rx="6.3" ry="2.3" transform="rotate(45 71.3 146.7)" fill="none" stroke="#6a7a70" stroke-width="0.8"/>
<ellipse cx="71.3" cy="146.7" rx="3.3" ry="1.1" transform="rotate(45 71.3 146.7)" fill="#d0e8fa" stroke="#6a7a70" stroke-width="0.7"/>
<!-- clip -->
<path d="M99.9 137.3 L103.3 139.3 L107.3 152.5 L100.2 149.3Z" fill="#66bb44" stroke="#5aa038" stroke-width="0.8"/>
<path d="M99.9 137.3 L109.2 134.6 L114.1 135.9 L103.3 139.3Z" fill="#8ad468" stroke="#5aa038" stroke-width="0.8"/>
<path d="M103.3 139.3 L114.1 135.9 L115.6 148.6 L107.3 152.5Z" fill="url(#rG)" stroke="#5aa038" stroke-width="0.8"/>
<path d="M109.2 133.6 L120.5 137.0 L120.5 150.0 L108.2 156.2 L99.6 149.2 L99.6 136.6 Z M108.2 141.3 L99.6 136.6 M108.2 141.3 L120.5 137.0 M108.2 141.3 L108.2 156.2" fill="none" stroke="#74745c" stroke-width="1"/>
<!-- slice -->
<path d="M139.9 138.8 L151.1 135.9 L151.6 138.0 L141.0 140.8Z" fill="#7ccc5a" stroke="#5aa038" stroke-width="0.8"/>
<path d="M141.0 140.8 L151.6 138.0 L153.0 148.6 L142.8 153.0Z" fill="url(#rG)" stroke="#5aa038" stroke-width="0.8"/>
<path d="M146.2 133.6 L157.5 137.0 L157.5 150.0 L145.2 156.2 L136.6 149.2 L136.6 136.6 Z M145.2 141.3 L136.6 136.6 M145.2 141.3 L157.5 137.0 M145.2 141.3 L145.2 156.2" fill="none" stroke="#74745c" stroke-width="1"/>
<!-- threshold -->
<path d="M173.8 136.5 L180.3 135.8 L180.3 141.5 L174.0 142.0Z" fill="#72c650" stroke="#74745c" stroke-width="0.8"/>
<path d="M176.5 138.5 L180.0 138.0 L180.0 141.5 L176.5 142.0Z" fill="#b4ec9a" stroke="#74745c" stroke-width="0.6"/>
<path d="M182.5 138.5 L194.0 136.8 L194.0 145.0 L191.5 145.5 L191.5 149.5 L187.5 150.0 L187.5 143.5 L182.5 144.0Z" fill="#90dc70" stroke="#74745c" stroke-width="0.8"/>
<path d="M186.5 140.5 L194.0 139.2 L194.0 145.0 L191.5 145.5 L191.5 149.5 L187.5 150.0 L187.5 143.5 L186.5 143.5Z" fill="url(#rG)" stroke="#74745c" stroke-width="0.6"/>
<path d="M183.2 133.6 L194.5 137.0 L194.5 150.0 L182.2 156.2 L173.6 149.2 L173.6 136.6 Z M182.2 141.3 L173.6 136.6 M182.2 141.3 L194.5 137.0 M182.2 141.3 L182.2 156.2" fill="none" stroke="#74745c" stroke-width="1"/>
<!-- extract -->
<path d="M219.8 133.6 L231.2 137.0 L231.2 150.0 L219.0 156.2 L210.3 149.2 L210.3 136.6Z" fill="url(#gBl)" stroke="#74745c" stroke-width="1"/>
<path d="M219.0 146.5 L219.0 156.2 M210.3 136.6 L219.8 140.5 L231.2 137.0" fill="none" stroke="#74745c" stroke-width="0.9"/>
<path d="M215.0 139.2 L219.8 137.2 L225.0 139.0 L225.0 145.0 L219.5 147.0 L215.0 145.0Z" fill="url(#rG)" stroke="#74745c" stroke-width="0.9"/>
<path d="M215.0 139.2 L219.5 141.0 L225.0 139.0 M219.5 141.0 V147.0" fill="none" stroke="#74745c" stroke-width="0.7"/>
<!-- glyph -->
<circle cx="258" cy="145" r="10.5" fill="url(#gBl)" stroke="#6e7a55" stroke-width="1.2"/>
<path d="M248 145C252 142 264 142 268 145M248 145C252 148 264 148 268 145M258 134.5C254 138 254 152 258 155.5M258 134.5C262 138 262 152 258 155.5" fill="none" stroke="#9abc8a" stroke-width="0.8"/>
<g fill="#9ed070" stroke="#5e6a44" stroke-width="0.7"><circle cx="258" cy="134.5" r="1.6"/><circle cx="247.5" cy="144.5" r="1.6"/><circle cx="268.5" cy="144.5" r="1.6"/><circle cx="258" cy="155" r="1.6"/><circle cx="253.2" cy="147.5" r="1.6"/><circle cx="263" cy="147.5" r="1.6"/></g>
<!-- stream tracer disabled -->
<path d="M283 136C287 133.5 291 137 295 137.5C299 138 302 136.5 306 136.5M283 139.5C286 138.5 289 140 291 141M297 141C299.5 140.5 302.5 140 306 140.5M283 150.5C286 151.5 289 150 291 149M297 149C299.5 149.5 302.5 150 306 149.5M283 154C287 156.5 291 153 295 152.5C299 152 302 153.5 306 153.5" fill="none" stroke="#a6a6a6" stroke-width="1.3"/>
<circle cx="291.5" cy="145" r="3.6" fill="url(#rGr)" stroke="#a8a8a8" stroke-width="0.8"/>
<!-- warp disabled -->
<path d="M320.5 145C328 144.5 335 140 338.5 133.5L344 136.5C342 143 338 147 333 149L320.5 150Z" fill="#d4d4d4" stroke="#c0c0c0" stroke-width="0.7"/>
<path d="M320.5 145C328 144.5 335 140 338.5 133.5L344 136.5V152L320.5 152.5Z" fill="url(#gGr)" opacity="0.5" stroke="#bcbcbc" stroke-width="0.7"/>
<!-- group -->
<circle cx="368.5" cy="145" r="11.5" fill="none" stroke="#78785e" stroke-width="1"/>
<circle cx="364.3" cy="140.8" r="2.6" fill="#d8ecfa" stroke="#78785e" stroke-width="0.8"/>
<circle cx="365.5" cy="150.5" r="2" fill="#d8ecfa" stroke="#78785e" stroke-width="0.8"/>
<circle cx="373" cy="145.5" r="4.2" fill="url(#rG)" stroke="#5e6a44" stroke-width="0.9"/>
<!-- extract disabled -->
<circle cx="408.5" cy="147" r="9.8" fill="none" stroke="#a8a8a8" stroke-width="1"/>
<circle cx="397.5" cy="136.5" r="2.8" fill="#ececec" stroke="#b4b4b4" stroke-width="1"/>
<circle cx="404.5" cy="151.5" r="2.1" fill="#ececec" stroke="#b4b4b4" stroke-width="1"/>
<circle cx="411" cy="146.5" r="3.9" fill="url(#rGr)" stroke="#b0b0b0" stroke-width="0.8"/>
<!-- view toolbar icons -->
<rect x="322.5" y="169.5" width="9" height="7.5" fill="#c6c6b2" stroke="#77775e" stroke-width="1"/>
<circle cx="327" cy="173.2" r="2" fill="#d8d8c8" stroke="#77775e" stroke-width="0.8"/>
<path d="M321 177.5C322.5 175 326 174.5 327.5 176.8C328.8 178.8 327.5 181 324.5 181.8" fill="none" stroke="#f05a40" stroke-width="2"/>
<path d="M317.8 181L319.2 175.8L323.2 178.6Z" fill="#f05a40"/>
<g opacity="0.5">
<rect x="353.5" y="169.5" width="9" height="7.5" fill="#c0c0c0" stroke="#8a8a8a" stroke-width="1"/>
<circle cx="358" cy="173.2" r="2" fill="none" stroke="#8a8a8a" stroke-width="0.8"/>
<path d="M359.5 177.5C360.5 180.5 364 181.5 366 178.8" fill="none" stroke="#8a8a8a" stroke-width="2"/>
<path d="M368 181L367 175.5L363 178.5Z" fill="#8a8a8a"/>
</g>
<rect x="389.5" y="168.5" width="10" height="11" fill="#d4e8d0" stroke="#7a7a60" stroke-width="0.9"/>
<rect x="389.5" y="168.5" width="10" height="2.5" fill="#a8d0f0" stroke="#7a7a60" stroke-width="0.7"/>
<path d="M391.5 173.5H397.5M391.5 176H397.5M391.5 173V178" stroke="#5aa038" stroke-width="0.8"/>
<rect x="425.5" y="168.5" width="9" height="9" fill="#c6c6b4" stroke="#6a6a52" stroke-width="1"/>
<circle cx="430" cy="173" r="2.3" fill="none" stroke="#6a6a52" stroke-width="0.9"/>
<circle cx="433.5" cy="177" r="3" fill="#4cc03a" stroke="#fff" stroke-width="0.6"/>
<path d="M459.5 169.5L467 167.5L469.5 177L462 179.5Z" fill="#d8d4b0" stroke="#7a7a60" stroke-width="0.9"/>
<path d="M465 168L464 175.5M462 173L464 176L466.5 172.5" fill="none" stroke="#46b038" stroke-width="1.2"/>
</g>
</svg>
<!--/ICONS-->
<div class="a" style="left:301px;top:350px;width:4px;height:40px;background:repeating-linear-gradient(#fff 0,#fff 1px,#a0a0a0 1px,#a0a0a0 2px)"></div>
<div class="a" style="left:297px;top:208px;width:1px;height:350px;background:#a8a8a8"></div>
<!-- view -->
<div class="a" style="left:306px;top:184px;width:371px;height:393px;border:2px solid #ff0000;background:#54596e"></div>
<div id="fld" style="position:absolute;left:330px;top:284px;width:323px;height:193px;overflow:hidden"><i style="top:0px;height:1px;background:linear-gradient(90deg,#02ff00 0.5px,#12ff00 64.5px,#02ff00 67.5px,#00fffa 104.5px,#00e0ff 109.5px,#005cff 129.5px,#00fffe 193.5px,#00c0ff 260.5px,#00ccff 322.5px)"></i><i style="top:1px;height:1px;background:linear-gradient(90deg,#00ff06 0.5px,#02ff00 2.5px,#12ff00 66.5px,#02ff00 68.5px,#00ff1e 73.5px,#00fcff 106.5px,#0064ff 129.5px,#0078ff 138.5px,#00fffe 190.5px,#00fff6 193.5px,#00fcff 196.5px,#00c0ff 258.5px,#00c8ff 291.5px,#00ccff 322.5px)"></i><i style="top:2px;height:1px;background:linear-gradient(90deg,#00ff0e 0.5px,#02ff00 2.5px,#12ff00 65.5px,#16ff00 66.5px,#00ff02 70.5px,#00fffe 107.5px,#0070ff 128.5px,#006cff 131.5px,#00fffe 188.5px,#00fff2 193.5px,#00fcff 196.5px,#00c0ff 258.5px,#00c8ff 263.5px,#00d0ff 322.5px)"></i><i style="top:3px;height:1px;background:linear-gradient(90deg,#00ff16 0.5px,#02ff00 3.5px,#12ff00 65.5px,#16ff00 67.5px,#00ff02 71.5px,#00fffe 108.5px,#0074ff 129.5px,#0080ff 136.5px,#00fffe 185.5px,#00ffea 193.5px,#00fffe 196.5px,#00f8ff 198.5px,#00c0ff 259.5px,#00c8ff 262.5px,#00d0ff 322.5px)"></i><i style="top:4px;height:1px;background:linear-gradient(90deg,#00ff1e 0.5px,#02ff00 4.5px,#12ff00 65.5px,#16ff00 69.5px,#02ff00 72.5px,#00fffe 109.5px,#0094ff 125.5px,#007cff 129.5px,#0084ff 135.5px,#00fffe 183.5px,#00ffe2 193.5px,#00fffe 197.5px,#00f4ff 200.5px,#00c0ff 259.5px,#00ccff 263.5px,#00d4ff 322.5px)"></i><i style="top:5px;height:1px;background:linear-gradient(90deg,#00ff26 0.5px,#02ff00 5.5px,#12ff00 65.5px,#1aff00 69.5px,#02ff00 73.5px,#00fcff 111.5px,#0084ff 129.5px,#0090ff 137.5px,#00fffe 180.5px,#00ffde 193.5px,#00fcff 198.5px,#00f4ff 201.5px,#00c0ff 258.5px,#00d0ff 267.5px,#00d4ff 322.5px)"></i><i style="top:6px;height:1px;background:linear-gradient(90deg,#00ff2e 0.5px,#02ff00 6.5px,#12ff00 65.5px,#1aff00 71.5px,#02ff00 74.5px,#00ff1e 79.5px,#00fcff 112.5px,#008cff 129.5px,#0098ff 138.5px,#00fffe 177.5px,#00ffd6 193.5px,#00fcff 199.5px,#00f4ff 200.5px,#00bcff 258.5px,#00d0ff 265.5px,#00d8ff 322.5px)"></i><i style="top:7px;height:1px;background:linear-gradient(90deg,#00ff36 0.5px,#02ff00 7.5px,#12ff00 65.5px,#1aff00 72.5px,#00ff02 76.5px,#00fffe 113.5px,#0094ff 129.5px,#00a0ff 138.5px,#00fffe 175.5px,#00ffce 193.5px,#00fcff 200.5px,#00f4ff 201.5px,#00bcff 258.5px,#00d4ff 266.5px,#00dcff 322.5px)"></i><i style="top:8px;height:1px;background:linear-gradient(90deg,#00ff3e 0.5px,#02ff00 8.5px,#12ff00 65.5px,#1eff00 72.5px,#00ff02 77.5px,#00fffe 114.5px,#009cff 129.5px,#00acff 140.5px,#00fffe 172.5px,#00ffca 193.5px,#00fffe 200.5px,#00f0ff 204.5px,#00bcff 258.5px,#00d4ff 266.5px,#00dcff 322.5px)"></i><i style="top:9px;height:1px;background:linear-gradient(90deg,#00ff46 0.5px,#02ff00 9.5px,#12ff00 65.5px,#1eff00 74.5px,#02ff00 78.5px,#00fffa 115.5px,#00e0ff 120.5px,#00a4ff 129.5px,#00b0ff 139.5px,#00fffe 170.5px,#00ffc2 193.5px,#00fffe 201.5px,#00f0ff 203.5px,#00bcff 258.5px,#00d8ff 268.5px,#00e0ff 322.5px)"></i><i style="top:10px;height:1px;background:linear-gradient(90deg,#00ff4e 0.5px,#02ff00 10.5px,#12ff00 65.5px,#1eff00 75.5px,#02ff00 79.5px,#00ff8e 100.5px,#00fcff 117.5px,#00acff 129.5px,#00bcff 141.5px,#00fffe 167.5px,#00ffba 193.5px,#00fffe 202.5px,#00f0ff 204.5px,#00bcff 258.5px,#00dcff 270.5px,#00e0ff 322.5px)"></i><i style="top:11px;height:1px;background:linear-gradient(90deg,#00ff56 0.5px,#02ff00 11.5px,#12ff00 65.5px,#22ff00 75.5px,#12ff00 78.5px,#02ff00 80.5px,#00ff1e 85.5px,#00fffe 118.5px,#00b4ff 129.5px,#00c8ff 143.5px,#00fffe 165.5px,#00ffb6 193.5px,#00fcff 203.5px,#00ecff 206.5px,#00bcff 258.5px,#00dcff 270.5px,#00e4ff 322.5px)"></i><i style="top:12px;height:1px;background:linear-gradient(90deg,#00ff5e 0.5px,#02ff00 12.5px,#12ff00 65.5px,#22ff00 77.5px,#00ff02 82.5px,#00fffe 119.5px,#00bcff 129.5px,#00ccff 142.5px,#00fffe 162.5px,#00ffae 193.5px,#00fcff 204.5px,#00ecff 206.5px,#00bcff 258.5px,#00e0ff 272.5px,#00e8ff 322.5px)"></i><i style="top:13px;height:1px;background:linear-gradient(90deg,#00ff66 0.5px,#02ff00 13.5px,#12ff00 65.5px,#22ff00 78.5px,#00ff02 83.5px,#00fffe 120.5px,#00c4ff 129.5px,#00d4ff 143.5px,#00fffe 160.5px,#00ffa6 193.5px,#00fcff 205.5px,#00ecff 207.5px,#00bcff 259.5px,#00e0ff 271.5px,#00e8ff 322.5px)"></i><i style="top:14px;height:1px;background:linear-gradient(90deg,#00ff6e 0.5px,#02ff00 14.5px,#12ff00 65.5px,#26ff00 78.5px,#16ff00 81.5px,#02ff00 84.5px,#00fffa 121.5px,#00e0ff 126.5px,#00ccff 129.5px,#00e4ff 146.5px,#00fffe 157.5px,#00ffa2 193.5px,#00fffe 205.5px,#00e8ff 208.5px,#00bcff 258.5px,#00e4ff 273.5px,#00ecff 322.5px)"></i><i style="top:15px;height:1px;background:linear-gradient(90deg,#00ff76 0.5px,#02ff00 15.5px,#0aff00 42.5px,#12ff00 65.5px,#26ff00 80.5px,#02ff00 85.5px,#00ffd2 116.5px,#00fcff 123.5px,#00dcff 128.5px,#00d8ff 132.5px,#00e8ff 145.5px,#00fffe 155.5px,#00ff9a 193.5px,#00fffe 206.5px,#00e8ff 209.5px,#00bcff 258.5px,#00e8ff 275.5px,#00ecff 322.5px)"></i><i style="top:16px;height:1px;background:linear-gradient(90deg,#00ff7e 0.5px,#02ff00 16.5px,#0aff00 41.5px,#12ff00 65.5px,#26ff00 81.5px,#02ff00 86.5px,#00ff1e 91.5px,#00fffe 124.5px,#00e4ff 128.5px,#00e0ff 132.5px,#00f0ff 146.5px,#00fffa 153.5px,#00ff92 193.5px,#00fffe 207.5px,#00e8ff 210.5px,#00b8ff 258.5px,#00e8ff 275.5px,#00f0ff 322.5px)"></i><i style="top:17px;height:1px;background:linear-gradient(90deg,#00ff86 0.5px,#00ff02 16.5px,#06ff00 19.5px,#12ff00 65.5px,#2aff00 81.5px,#1aff00 84.5px,#00ff02 88.5px,#00fffe 125.5px,#00e8ff 129.5px,#00f8ff 146.5px,#00fffa 151.5px,#00ff8e 193.5px,#00fcff 208.5px,#00e4ff 211.5px,#00b8ff 258.5px,#00ecff 276.5px,#00f0ff 322.5px)"></i><i style="top:18px;height:1px;background:linear-gradient(90deg,#00ff8e 0.5px,#00ff02 17.5px,#06ff00 20.5px,#12ff00 65.5px,#2aff00 83.5px,#00ff02 89.5px,#00fffe 126.5px,#00f0ff 130.5px,#00fffa 148.5px,#00ff86 193.5px,#00fcff 209.5px,#00e4ff 212.5px,#00b8ff 258.5px,#00ecff 276.5px,#00f4ff 322.5px)"></i><i style="top:19px;height:1px;background:linear-gradient(90deg,#00ff96 0.5px,#00ff02 18.5px,#06ff00 21.5px,#12ff00 65.5px,#2aff00 84.5px,#02ff00 90.5px,#00fffa 127.5px,#00f8ff 131.5px,#00fffa 142.5px,#00ffee 151.5px,#00ff7e 193.5px,#00fcff 210.5px,#00e4ff 213.5px,#00b8ff 258.5px,#00f0ff 278.5px,#00f8ff 322.5px)"></i><i style="top:20px;height:1px;background:linear-gradient(90deg,#00ff9e 0.5px,#00ff02 19.5px,#06ff00 22.5px,#12ff00 65.5px,#2eff00 84.5px,#1eff00 87.5px,#02ff00 91.5px,#00ffd2 122.5px,#00fffe 129.5px,#00ffe6 151.5px,#00ff7a 193.5px,#00fffe 210.5px,#00e0ff 214.5px,#00b8ff 258.5px,#00f4ff 279.5px,#00f8ff 322.5px)"></i><i style="top:21px;height:1px;background:linear-gradient(90deg,#00ffa6 0.5px,#00ff02 20.5px,#06ff00 23.5px,#12ff00 65.5px,#2eff00 86.5px,#00ff02 93.5px,#00fff2 128.5px,#00fff6 131.5px,#00ffde 152.5px,#00ff72 193.5px,#00fffe 211.5px,#00e0ff 215.5px,#00b8ff 258.5px,#00f4ff 279.5px,#00fcff 322.5px)"></i><i style="top:22px;height:1px;background:linear-gradient(90deg,#00ffae 0.5px,#00ff02 21.5px,#06ff00 24.5px,#12ff00 65.5px,#2eff00 87.5px,#00ff02 94.5px,#00ffea 128.5px,#00ffee 131.5px,#00ffd6 152.5px,#00ff6a 193.5px,#00fffe 212.5px,#00e0ff 216.5px,#00b8ff 258.5px,#00f8ff 281.5px,#00fcff 322.5px)"></i><i style="top:23px;height:1px;background:linear-gradient(90deg,#00ffb6 0.5px,#00ff02 22.5px,#06ff00 25.5px,#12ff00 65.5px,#32ff00 87.5px,#22ff00 90.5px,#02ff00 95.5px,#00ffe6 129.5px,#00ffca 154.5px,#00ff66 193.5px,#00fcff 213.5px,#00dcff 217.5px,#00b8ff 259.5px,#00fcff 283.5px,#00fffe 322.5px)"></i><i style="top:24px;height:1px;background:linear-gradient(90deg,#00ffbe 0.5px,#00ff02 23.5px,#06ff00 26.5px,#12ff00 65.5px,#32ff00 89.5px,#02ff00 96.5px,#00ffde 129.5px,#00ffc2 155.5px,#00ff5e 193.5px,#00fcff 214.5px,#00dcff 218.5px,#00b8ff 258.5px,#00fcff 283.5px,#00fffa 322.5px)"></i><i style="top:25px;height:1px;background:linear-gradient(90deg,#00ffc6 0.5px,#00ff02 24.5px,#06ff00 27.5px,#12ff00 65.5px,#32ff00 90.5px,#02ff00 97.5px,#00ff72 114.5px,#00ffd6 129.5px,#00ffba 155.5px,#00ff56 193.5px,#00fcff 215.5px,#00d8ff 220.5px,#00b4ff 258.5px,#00fffe 284.5px,#00fffa 322.5px)"></i><i style="top:26px;height:1px;background:linear-gradient(90deg,#00ffce 0.5px,#00ff02 25.5px,#0aff00 30.5px,#12ff00 65.5px,#36ff00 91.5px,#00ff02 99.5px,#00ffce 129.5px,#00ffb2 156.5px,#00ff52 193.5px,#00fffe 215.5px,#00d8ff 220.5px,#00b4ff 258.5px,#00fffe 284.5px,#00fff6 322.5px)"></i><i style="top:27px;height:1px;background:linear-gradient(90deg,#00ffd6 0.5px,#00ff02 26.5px,#0aff00 31.5px,#12ff00 65.5px,#36ff00 92.5px,#00ff02 100.5px,#00ffc6 129.5px,#00ffa6 158.5px,#00ff4a 193.5px,#00fffe 216.5px,#00d8ff 221.5px,#00b4ff 258.5px,#00fffe 284.5px,#00fff6 315.5px,#00fff6 322.5px)"></i><i style="top:28px;height:1px;background:linear-gradient(90deg,#00ffde 0.5px,#00ff02 27.5px,#0aff00 30.5px,#12ff00 65.5px,#36ff00 93.5px,#02ff00 101.5px,#00ffbe 129.5px,#00ff9e 158.5px,#00ff42 193.5px,#00fffe 217.5px,#00d4ff 223.5px,#00b4ff 258.5px,#00fffe 284.5px,#00fff6 289.5px,#00fff2 322.5px)"></i><i style="top:29px;height:1px;background:linear-gradient(90deg,#00ffe6 0.5px,#00ff02 28.5px,#0aff00 31.5px,#12ff00 65.5px,#3aff00 94.5px,#02ff00 102.5px,#00ffb6 129.5px,#00ff96 159.5px,#00ff3e 193.5px,#00fcff 218.5px,#00d4ff 223.5px,#00b4ff 258.5px,#00fffe 284.5px,#00fff6 289.5px,#00fff2 322.5px)"></i><i style="top:30px;height:1px;background:linear-gradient(90deg,#00ffee 0.5px,#00ff02 29.5px,#0aff00 32.5px,#12ff00 65.5px,#3aff00 95.5px,#02ff00 103.5px,#00ff12 106.5px,#00ffae 129.5px,#00ff8e 159.5px,#00ff36 193.5px,#00fcff 219.5px,#00d4ff 224.5px,#00b4ff 258.5px,#00fffe 285.5px,#00fff2 289.5px,#00ffee 322.5px)"></i><i style="top:31px;height:1px;background:linear-gradient(90deg,#00fff6 0.5px,#00ff02 30.5px,#0aff00 33.5px,#12ff00 65.5px,#3aff00 96.5px,#00ff02 105.5px,#00ffa6 129.5px,#00ff82 162.5px,#00ff2e 193.5px,#00fffa 219.5px,#00dcff 224.5px,#00d0ff 226.5px,#00b4ff 258.5px,#00fffe 285.5px,#00ffee 291.5px,#00ffea 322.5px)"></i><i style="top:32px;height:1px;background:linear-gradient(90deg,#00fffe 0.5px,#00ff02 31.5px,#0aff00 34.5px,#12ff00 65.5px,#3eff00 97.5px,#00ff02 106.5px,#00ff96 128.5px,#00ff9a 132.5px,#00ff7a 162.5px,#00ff2a 193.5px,#00fffe 220.5px,#00d0ff 226.5px,#00b4ff 259.5px,#00fffe 285.5px,#00ffee 291.5px,#00ffea 322.5px)"></i><i style="top:33px;height:1px;background:linear-gradient(90deg,#00f8ff 0.5px,#00fff6 2.5px,#00ff02 32.5px,#0aff00 33.5px,#12ff00 65.5px,#3eff00 98.5px,#02ff00 107.5px,#00ff8e 128.5px,#00ff92 132.5px,#00ff6e 164.5px,#00ff22 193.5px,#00fffe 221.5px,#00d0ff 227.5px,#00b4ff 259.5px,#00fffe 285.5px,#00ffea 293.5px,#00ffe6 322.5px)"></i><i style="top:34px;height:1px;background:linear-gradient(90deg,#00f0ff 0.5px,#00fffe 2.5px,#02ff00 33.5px,#0aff00 34.5px,#12ff00 65.5px,#3eff00 99.5px,#02ff00 108.5px,#00ff86 128.5px,#00ff8a 132.5px,#00ff66 165.5px,#00ff1a 193.5px,#00fffe 222.5px,#00ccff 229.5px,#00b4ff 258.5px,#00fffe 285.5px,#00ffea 293.5px,#00ffe6 322.5px)"></i><i style="top:35px;height:1px;background:linear-gradient(90deg,#00e8ff 0.5px,#00fffe 3.5px,#02ff00 34.5px,#0aff00 35.5px,#12ff00 65.5px,#42ff00 100.5px,#02ff00 109.5px,#00ff12 112.5px,#00ff82 129.5px,#00ff5e 165.5px,#00ff16 193.5px,#00fcff 223.5px,#00ccff 229.5px,#00b0ff 258.5px,#00fffe 285.5px,#00ffe6 294.5px,#00ffe2 322.5px)"></i><i style="top:36px;height:1px;background:linear-gradient(90deg,#00e0ff 0.5px,#00fffe 4.5px,#02ff00 35.5px,#0aff00 36.5px,#12ff00 65.5px,#42ff00 101.5px,#00ff02 111.5px,#00ff76 128.5px,#00ff7a 131.5px,#00ff52 167.5px,#00ff0e 193.5px,#00fcff 224.5px,#00ccff 230.5px,#00b0ff 258.5px,#00fffe 285.5px,#00ffe2 296.5px,#00ffde 322.5px)"></i><i style="top:37px;height:1px;background:linear-gradient(90deg,#00d8ff 0.5px,#00fffe 5.5px,#02ff00 36.5px,#0aff00 37.5px,#12ff00 65.5px,#46ff00 101.5px,#36ff00 104.5px,#00ff02 112.5px,#00ff72 129.5px,#00ff4a 168.5px,#00ff06 193.5px,#00fffa 224.5px,#00dcff 229.5px,#00c8ff 232.5px,#00b0ff 258.5px,#00fffe 286.5px,#00ffe2 296.5px,#00ffde 322.5px)"></i><i style="top:38px;height:1px;background:linear-gradient(90deg,#00d0ff 0.5px,#00fffe 6.5px,#02ff00 37.5px,#0aff00 38.5px,#12ff00 65.5px,#46ff00 103.5px,#02ff00 113.5px,#00ff6a 129.5px,#00ff42 168.5px,#00ff02 193.5px,#00fffe 225.5px,#00c8ff 232.5px,#00b0ff 258.5px,#00fffe 286.5px,#00ffde 297.5px,#00ffda 322.5px)"></i><i style="top:39px;height:1px;background:linear-gradient(90deg,#00c8ff 0.5px,#00fffe 7.5px,#02ff00 38.5px,#0aff00 39.5px,#12ff00 65.5px,#46ff00 103.5px,#46ff00 104.5px,#02ff00 114.5px,#00ff62 129.5px,#00ff36 170.5px,#02ff00 192.5px,#06ff00 193.5px,#00ff06 195.5px,#00fffe 226.5px,#00c8ff 233.5px,#00b0ff 258.5px,#00fffe 286.5px,#00ffde 297.5px,#00ffda 322.5px)"></i><i style="top:40px;height:1px;background:linear-gradient(90deg,#00c0ff 0.5px,#00fffe 8.5px,#02ff00 39.5px,#0aff00 40.5px,#12ff00 65.5px,#4aff00 104.5px,#3aff00 107.5px,#02ff00 115.5px,#00ff12 118.5px,#00ff5a 129.5px,#00ff2e 171.5px,#02ff00 189.5px,#0eff00 193.5px,#00ff02 195.5px,#00fffe 227.5px,#00c4ff 235.5px,#00b0ff 258.5px,#00fffe 286.5px,#00ffda 299.5px,#00ffd6 322.5px)"></i><i style="top:41px;height:1px;background:linear-gradient(90deg,#00b8ff 0.5px,#00fffe 9.5px,#02ff00 40.5px,#0aff00 41.5px,#12ff00 65.5px,#4aff00 106.5px,#00ff02 117.5px,#00ff52 129.5px,#00ff26 171.5px,#02ff00 187.5px,#12ff00 193.5px,#00ff02 196.5px,#00fcff 228.5px,#00c4ff 235.5px,#00b0ff 258.5px,#00fffe 286.5px,#00ffd6 300.5px,#00ffd6 322.5px)"></i><i style="top:42px;height:1px;background:linear-gradient(90deg,#00b0ff 0.5px,#00fffe 10.5px,#02ff00 41.5px,#0aff00 42.5px,#12ff00 65.5px,#4aff00 106.5px,#4aff00 107.5px,#00ff02 118.5px,#00ff4a 129.5px,#00ff1e 172.5px,#02ff00 184.5px,#1aff00 193.5px,#00ff02 197.5px,#00fcff 229.5px,#00c4ff 236.5px,#00b0ff 259.5px,#00fffe 286.5px,#00ffd6 301.5px,#00ffd2 322.5px)"></i><i style="top:43px;height:1px;background:linear-gradient(90deg,#00a8ff 0.5px,#00f8ff 10.5px,#00fff2 12.5px,#02ff00 42.5px,#0eff00 44.5px,#12ff00 65.5px,#4eff00 107.5px,#3eff00 110.5px,#02ff00 119.5px,#00ff42 129.5px,#00ff12 174.5px,#02ff00 182.5px,#22ff00 193.5px,#02ff00 197.5px,#00fffe 229.5px,#00dcff 234.5px,#00c0ff 238.5px,#00b0ff 259.5px,#00fffe 286.5px,#00ffd2 303.5px,#00ffce 322.5px)"></i><i style="top:44px;height:1px;background:linear-gradient(90deg,#00a0ff 0.5px,#00fcff 11.5px,#02ff00 43.5px,#0eff00 45.5px,#12ff00 65.5px,#4eff00 109.5px,#02ff00 120.5px,#00ff3a 129.5px,#00ff0a 174.5px,#06ff00 181.5px,#26ff00 193.5px,#02ff00 198.5px,#00fffe 230.5px,#00c0ff 238.5px,#00b0ff 259.5px,#00fffe 287.5px,#00ffce 304.5px,#00ffce 322.5px)"></i><i style="top:45px;height:1px;background:linear-gradient(90deg,#0098ff 0.5px,#00fcff 12.5px,#02ff00 44.5px,#0eff00 46.5px,#12ff00 65.5px,#4eff00 109.5px,#4eff00 110.5px,#02ff00 121.5px,#00ff1e 126.5px,#00ff32 129.5px,#02ff00 177.5px,#2eff00 193.5px,#02ff00 199.5px,#00fffe 231.5px,#00c0ff 239.5px,#00acff 258.5px,#00fffe 287.5px,#00ffce 304.5px,#00ffca 322.5px)"></i><i style="top:46px;height:1px;background:linear-gradient(90deg,#0090ff 0.5px,#00fcff 13.5px,#02ff00 45.5px,#0eff00 47.5px,#12ff00 65.5px,#52ff00 111.5px,#00ff02 123.5px,#00ff2a 129.5px,#02ff00 172.5px,#0aff00 177.5px,#36ff00 193.5px,#00ff02 200.5px,#00fcff 232.5px,#00bcff 241.5px,#00acff 258.5px,#00fffe 287.5px,#00ffca 305.5px,#00ffca 322.5px)"></i><i style="top:47px;height:1px;background:linear-gradient(90deg,#0088ff 0.5px,#00fcff 14.5px,#02ff00 46.5px,#0eff00 48.5px,#12ff00 65.5px,#52ff00 112.5px,#00ff02 124.5px,#00ff22 129.5px,#02ff00 164.5px,#12ff00 178.5px,#3aff00 193.5px,#00ff02 201.5px,#00fcff 233.5px,#00bcff 241.5px,#00acff 258.5px,#00fffe 287.5px,#00ffca 305.5px,#00ffc6 322.5px)"></i><i style="top:48px;height:1px;background:linear-gradient(90deg,#0080ff 0.5px,#00fcff 15.5px,#02ff00 47.5px,#0eff00 49.5px,#12ff00 65.5px,#52ff00 112.5px,#4eff00 114.5px,#02ff00 125.5px,#00ff1a 129.5px,#02ff00 155.5px,#1aff00 178.5px,#42ff00 193.5px,#00ff02 202.5px,#00fcff 234.5px,#00bcff 242.5px,#00acff 258.5px,#00fffe 287.5px,#00ffc6 307.5px,#00ffc2 322.5px)"></i><i style="top:49px;height:1px;background:linear-gradient(90deg,#0078ff 0.5px,#00fcff 16.5px,#02ff00 48.5px,#0eff00 50.5px,#12ff00 65.5px,#56ff00 114.5px,#02ff00 126.5px,#00ff0e 130.5px,#02ff00 148.5px,#26ff00 180.5px,#46ff00 193.5px,#02ff00 202.5px,#00fffe 234.5px,#00b8ff 244.5px,#00acff 258.5px,#00fffe 287.5px,#00ffc2 309.5px,#00ffc2 322.5px)"></i><i style="top:50px;height:1px;background:linear-gradient(90deg,#0070ff 0.5px,#00fcff 17.5px,#02ff00 49.5px,#0eff00 50.5px,#12ff00 65.5px,#56ff00 115.5px,#02ff00 127.5px,#00ff06 132.5px,#06ff00 144.5px,#2eff00 181.5px,#4eff00 193.5px,#02ff00 203.5px,#00fffe 235.5px,#00b8ff 244.5px,#00acff 258.5px,#00fffe 287.5px,#00ffc2 309.5px,#00ffbe 322.5px)"></i><i style="top:51px;height:1px;background:linear-gradient(90deg,#0068ff 0.5px,#00fcff 18.5px,#00ff06 49.5px,#0eff00 51.5px,#16ff00 68.5px,#56ff00 115.5px,#52ff00 117.5px,#06ff00 128.5px,#02ff00 132.5px,#36ff00 181.5px,#56ff00 193.5px,#02ff00 204.5px,#00fffe 236.5px,#00b8ff 245.5px,#00acff 258.5px,#00fffe 288.5px,#00ffbe 310.5px,#00ffbe 322.5px)"></i><i style="top:52px;height:1px;background:linear-gradient(90deg,#0060ff 0.5px,#00fcff 19.5px,#00ff16 48.5px,#00ff02 50.5px,#0eff00 52.5px,#16ff00 68.5px,#5aff00 117.5px,#0eff00 128.5px,#0aff00 132.5px,#42ff00 183.5px,#5aff00 193.5px,#00ff02 205.5px,#00fcff 237.5px,#00b4ff 247.5px,#00acff 259.5px,#00fffe 288.5px,#00ffbe 310.5px,#00ffba 322.5px)"></i><i style="top:53px;height:1px;background:linear-gradient(90deg,#0058ff 0.5px,#00fcff 20.5px,#00ff1e 48.5px,#00ff02 51.5px,#0eff00 53.5px,#16ff00 68.5px,#5aff00 118.5px,#12ff00 129.5px,#4aff00 184.5px,#62ff00 193.5px,#00ff02 206.5px,#00fcff 238.5px,#00b4ff 247.5px,#00acff 259.5px,#00fffe 288.5px,#00ffba 312.5px,#00ffba 322.5px)"></i><i style="top:54px;height:1px;background:linear-gradient(90deg,#0050ff 0.5px,#00fcff 21.5px,#00ff26 48.5px,#00ff02 52.5px,#0eff00 54.5px,#16ff00 68.5px,#5aff00 118.5px,#56ff00 120.5px,#1eff00 128.5px,#1aff00 131.5px,#52ff00 184.5px,#6aff00 193.5px,#00ff02 207.5px,#00fcff 239.5px,#00b4ff 248.5px,#00acff 259.5px,#00fffe 288.5px,#00ffb6 313.5px,#00ffb6 322.5px)"></i><i style="top:55px;height:1px;background:linear-gradient(90deg,#0048ff 0.5px,#00fcff 22.5px,#00ff2e 48.5px,#00ff02 53.5px,#0eff00 55.5px,#16ff00 68.5px,#5eff00 120.5px,#26ff00 128.5px,#22ff00 131.5px,#5eff00 186.5px,#6eff00 193.5px,#02ff00 207.5px,#00fffe 239.5px,#00b0ff 250.5px,#00a8ff 258.5px,#00fffe 288.5px,#00ffb6 314.5px,#00ffb2 322.5px)"></i><i style="top:56px;height:1px;background:linear-gradient(90deg,#0040ff 0.5px,#00fcff 23.5px,#00ff02 54.5px,#0eff00 56.5px,#16ff00 68.5px,#5eff00 121.5px,#2aff00 129.5px,#66ff00 187.5px,#76ff00 193.5px,#02ff00 208.5px,#00fffe 240.5px,#00b0ff 250.5px,#00a8ff 258.5px,#00fffe 288.5px,#00ffb2 315.5px,#00ffb2 322.5px)"></i><i style="top:57px;height:1px;background:linear-gradient(90deg,#0038ff 0.5px,#00fcff 24.5px,#00ff02 55.5px,#0eff00 57.5px,#16ff00 68.5px,#5eff00 121.5px,#5aff00 123.5px,#32ff00 129.5px,#6eff00 187.5px,#7eff00 193.5px,#02ff00 209.5px,#00fffe 241.5px,#00b0ff 251.5px,#00a8ff 258.5px,#00fffe 288.5px,#00ffae 317.5px,#00ffae 322.5px)"></i><i style="top:58px;height:1px;background:linear-gradient(90deg,#0030ff 0.5px,#00fcff 25.5px,#00ff02 56.5px,#12ff00 59.5px,#16ff00 68.5px,#62ff00 123.5px,#3aff00 129.5px,#76ff00 188.5px,#82ff00 193.5px,#00ff02 210.5px,#00fcff 242.5px,#00b0ff 252.5px,#00a8ff 258.5px,#00fffe 289.5px,#00ffae 317.5px,#00ffae 322.5px)"></i><i style="top:59px;height:1px;background:linear-gradient(90deg,#0028ff 0.5px,#00fcff 26.5px,#00ff02 57.5px,#12ff00 60.5px,#16ff00 68.5px,#62ff00 124.5px,#42ff00 129.5px,#82ff00 190.5px,#8aff00 193.5px,#00ff02 211.5px,#00fcff 243.5px,#00acff 253.5px,#00a8ff 258.5px,#00fffe 289.5px,#00ffaa 318.5px,#00ffaa 322.5px)"></i><i style="top:60px;height:1px;background:linear-gradient(90deg,#0020ff 0.5px,#00fcff 27.5px,#00ff02 58.5px,#12ff00 61.5px,#16ff00 68.5px,#62ff00 124.5px,#5eff00 126.5px,#4aff00 129.5px,#8aff00 191.5px,#92ff00 193.5px,#00ff02 212.5px,#00fcff 244.5px,#00acff 254.5px,#00a8ff 258.5px,#00fffe 289.5px,#00ffaa 318.5px,#00ffa6 322.5px)"></i><i style="top:61px;height:1px;background:linear-gradient(90deg,#0018ff 0.5px,#00fffe 28.5px,#00ff02 59.5px,#12ff00 62.5px,#42ff00 100.5px,#66ff00 126.5px,#52ff00 129.5px,#92ff00 191.5px,#96ff00 193.5px,#02ff00 212.5px,#00fffe 244.5px,#00acff 255.5px,#00a8ff 258.5px,#00fffe 289.5px,#00ffa6 320.5px,#00ffa6 322.5px)"></i><i style="top:62px;height:1px;background:linear-gradient(90deg,#0010ff 0.5px,#00fffe 29.5px,#00ff02 60.5px,#12ff00 63.5px,#66ff00 127.5px,#5aff00 129.5px,#9eff00 193.5px,#02ff00 213.5px,#00fffe 245.5px,#00a8ff 256.5px,#00acff 260.5px,#00fffe 289.5px,#00ffa2 322.5px)"></i><i style="top:63px;height:1px;background:linear-gradient(90deg,#0008ff 0.5px,#00fffe 30.5px,#00ff02 61.5px,#12ff00 64.5px,#66ff00 128.5px,#62ff00 129.5px,#a6ff00 193.5px,#02ff00 214.5px,#00fffe 246.5px,#00a8ff 257.5px,#00acff 260.5px,#00fffe 289.5px,#00ffa2 322.5px)"></i><i style="top:64px;height:1px;background:linear-gradient(90deg,#0000ff 0.5px,#00fffe 31.5px,#00ff02 62.5px,#12ff00 64.5px,#6eff00 134.5px,#aaff00 193.5px,#00ff02 215.5px,#00fcff 247.5px,#00a8ff 258.5px,#00ccff 271.5px,#00fffe 290.5px,#00ffa2 322.5px)"></i><i style="top:65px;height:1px;background:linear-gradient(90deg,#0004ff 0.5px,#0088ff 17.5px,#00fcff 31.5px,#00ff2e 57.5px,#00ff02 62.5px,#12ff00 65.5px,#6eff00 135.5px,#aaff00 193.5px,#9aff00 196.5px,#02ff00 215.5px,#00fffe 247.5px,#00acff 258.5px,#00a8ff 259.5px,#00fffe 290.5px,#00ffa2 322.5px)"></i><i style="top:66px;height:1px;background:linear-gradient(90deg,#000cff 0.5px,#000cff 2.5px,#00fffe 32.5px,#02ff00 63.5px,#0eff00 65.5px,#6aff00 133.5px,#a6ff00 195.5px,#00ff02 216.5px,#00fcff 248.5px,#00acff 259.5px,#00a8ff 260.5px,#00fffe 290.5px,#00ffa2 322.5px)"></i><i style="top:67px;height:1px;background:linear-gradient(90deg,#0014ff 0.5px,#0010ff 3.5px,#00fffe 32.5px,#00ff02 63.5px,#12ff00 68.5px,#6aff00 135.5px,#a6ff00 194.5px,#a2ff00 196.5px,#02ff00 216.5px,#00fcff 249.5px,#00b0ff 259.5px,#00acff 261.5px,#00fffe 291.5px,#00ffa2 322.5px)"></i><i style="top:68px;height:1px;background:linear-gradient(90deg,#001cff 0.5px,#0014ff 3.5px,#00a8ff 22.5px,#00fcff 32.5px,#00ff0e 62.5px,#00ff02 63.5px,#12ff00 70.5px,#6aff00 137.5px,#a2ff00 194.5px,#9eff00 197.5px,#00ff02 217.5px,#00fffe 249.5px,#00b4ff 259.5px,#00acff 262.5px,#00fffe 291.5px,#00ffa6 322.5px)"></i><i style="top:69px;height:1px;background:linear-gradient(90deg,#0020ff 0.5px,#001cff 5.5px,#00fffe 33.5px,#02ff00 64.5px,#16ff00 75.5px,#62ff00 131.5px,#a2ff00 194.5px,#9aff00 198.5px,#06ff00 217.5px,#00ff12 220.5px,#00fcff 250.5px,#00b8ff 259.5px,#00b0ff 264.5px,#00fffe 291.5px,#00ffa6 322.5px)"></i><i style="top:70px;height:1px;background:linear-gradient(90deg,#0028ff 0.5px,#0020ff 6.5px,#00fffe 33.5px,#00ff02 64.5px,#16ff00 76.5px,#66ff00 137.5px,#9eff00 194.5px,#92ff00 200.5px,#02ff00 218.5px,#00fffe 250.5px,#00bcff 259.5px,#00b0ff 264.5px,#00fffe 292.5px,#00ffa6 322.5px)"></i><i style="top:71px;height:1px;background:linear-gradient(90deg,#0030ff 0.5px,#0024ff 7.5px,#00fcff 33.5px,#00ff02 65.5px,#16ff00 77.5px,#66ff00 138.5px,#9eff00 194.5px,#8eff00 201.5px,#00ff02 219.5px,#00fcff 251.5px,#00c0ff 259.5px,#00b4ff 266.5px,#00fffe 292.5px,#00ffaa 322.5px)"></i><i style="top:72px;height:1px;background:linear-gradient(90deg,#0038ff 0.5px,#0028ff 7.5px,#009cff 22.5px,#00fffe 34.5px,#00ff06 64.5px,#0aff00 71.5px,#62ff00 136.5px,#9aff00 194.5px,#8aff00 202.5px,#02ff00 219.5px,#00fffe 251.5px,#00c4ff 259.5px,#00b4ff 266.5px,#00fffe 292.5px,#00ffaa 322.5px)"></i><i style="top:73px;height:1px;background:linear-gradient(90deg,#0040ff 0.5px,#0030ff 9.5px,#00fcff 34.5px,#00ff0a 64.5px,#06ff00 71.5px,#16ff00 80.5px,#62ff00 138.5px,#9aff00 194.5px,#86ff00 203.5px,#00ff02 220.5px,#00fcff 252.5px,#00ccff 258.5px,#00b8ff 267.5px,#00f0ff 287.5px,#00fffa 294.5px,#00ffaa 322.5px)"></i><i style="top:74px;height:1px;background:linear-gradient(90deg,#0044ff 0.5px,#0034ff 10.5px,#00fcff 34.5px,#00ff0a 65.5px,#06ff00 72.5px,#2eff00 99.5px,#5eff00 136.5px,#9aff00 193.5px,#82ff00 204.5px,#02ff00 220.5px,#00fffe 252.5px,#00d0ff 258.5px,#00b8ff 268.5px,#00fffe 293.5px,#00ffaa 322.5px)"></i><i style="top:75px;height:1px;background:linear-gradient(90deg,#004cff 0.5px,#0038ff 10.5px,#00c4ff 28.5px,#00fffe 35.5px,#00ff12 64.5px,#02ff00 72.5px,#0eff00 77.5px,#5eff00 138.5px,#96ff00 194.5px,#7eff00 205.5px,#00ff02 221.5px,#00fcff 253.5px,#00d4ff 258.5px,#00b8ff 269.5px,#00fffe 294.5px,#00ffae 322.5px)"></i><i style="top:76px;height:1px;background:linear-gradient(90deg,#0054ff 0.5px,#0040ff 12.5px,#00fcff 35.5px,#00ff1e 63.5px,#00ff12 64.5px,#02ff00 73.5px,#16ff00 84.5px,#5aff00 136.5px,#96ff00 193.5px,#7aff00 206.5px,#02ff00 221.5px,#00fffe 253.5px,#00d8ff 258.5px,#00bcff 271.5px,#00fffe 294.5px,#00ffae 322.5px)"></i><i style="top:77px;height:1px;background:linear-gradient(90deg,#005cff 0.5px,#0044ff 13.5px,#00fffe 36.5px,#00ff16 64.5px,#02ff00 74.5px,#12ff00 83.5px,#5aff00 138.5px,#92ff00 194.5px,#76ff00 207.5px,#00ff02 222.5px,#00fcff 254.5px,#00dcff 258.5px,#00bcff 271.5px,#00fffe 294.5px,#00ffae 322.5px)"></i><i style="top:78px;height:1px;background:linear-gradient(90deg,#0064ff 0.5px,#0048ff 13.5px,#00e4ff 33.5px,#00fffe 36.5px,#00ff1a 64.5px,#02ff00 75.5px,#12ff00 84.5px,#56ff00 136.5px,#92ff00 193.5px,#72ff00 208.5px,#02ff00 222.5px,#00fffe 254.5px,#00e0ff 258.5px,#00c0ff 272.5px,#00fffe 295.5px,#00ffae 322.5px)"></i><i style="top:79px;height:1px;background:linear-gradient(90deg,#0068ff 0.5px,#0050ff 15.5px,#00fcff 36.5px,#00ff1a 65.5px,#02ff00 76.5px,#32ff00 109.5px,#5aff00 141.5px,#8eff00 194.5px,#6eff00 209.5px,#00ff02 223.5px,#00fcff 255.5px,#00e4ff 258.5px,#00c0ff 273.5px,#00fffe 295.5px,#00ffb2 322.5px)"></i><i style="top:80px;height:1px;background:linear-gradient(90deg,#0070ff 0.5px,#0054ff 16.5px,#00fffe 37.5px,#00ff1e 64.5px,#02ff00 78.5px,#12ff00 87.5px,#52ff00 136.5px,#8eff00 194.5px,#6aff00 210.5px,#02ff00 223.5px,#00fffe 255.5px,#00e8ff 259.5px,#00c4ff 274.5px,#00fffe 296.5px,#00ffb2 322.5px)"></i><i style="top:81px;height:1px;background:linear-gradient(90deg,#0078ff 0.5px,#0058ff 17.5px,#00fcff 37.5px,#00ff22 64.5px,#02ff00 79.5px,#22ff00 100.5px,#56ff00 141.5px,#8aff00 194.5px,#66ff00 211.5px,#00ff02 224.5px,#00fcff 256.5px,#00e8ff 260.5px,#00c4ff 275.5px,#00fffe 296.5px,#00ffb2 322.5px)"></i><i style="top:82px;height:1px;background:linear-gradient(90deg,#0080ff 0.5px,#0060ff 17.5px,#0060ff 18.5px,#00fcff 37.5px,#00ff22 65.5px,#02ff00 80.5px,#4aff00 131.5px,#8aff00 194.5px,#62ff00 212.5px,#02ff00 224.5px,#00fffa 256.5px,#00ecff 261.5px,#00c8ff 276.5px,#00fffe 297.5px,#00ffb6 322.5px)"></i><i style="top:83px;height:1px;background:linear-gradient(90deg,#0084ff 0.5px,#0064ff 19.5px,#00fffe 38.5px,#00ff2a 64.5px,#02ff00 81.5px,#46ff00 130.5px,#86ff00 193.5px,#66ff00 212.5px,#00ff02 225.5px,#00fffe 257.5px,#00ecff 262.5px,#00c8ff 277.5px,#00fffe 297.5px,#00ffb6 322.5px)"></i><i style="top:84px;height:1px;background:linear-gradient(90deg,#008cff 0.5px,#0068ff 20.5px,#00fcff 38.5px,#00ff2a 65.5px,#02ff00 83.5px,#3aff00 122.5px,#66ff00 162.5px,#86ff00 194.5px,#62ff00 213.5px,#00ff02 226.5px,#00fcff 258.5px,#00ccff 278.5px,#00d8ff 283.5px,#00fffe 297.5px,#00ffb6 322.5px)"></i><i style="top:85px;height:1px;background:linear-gradient(90deg,#0094ff 0.5px,#006cff 20.5px,#00fffe 39.5px,#00ff2e 64.5px,#02ff00 84.5px,#42ff00 130.5px,#86ff00 193.5px,#5aff00 215.5px,#02ff00 226.5px,#00fffe 258.5px,#00ccff 280.5px,#00fffe 297.5px,#00ffb6 322.5px)"></i><i style="top:86px;height:1px;background:linear-gradient(90deg,#009cff 0.5px,#0074ff 22.5px,#00fffe 39.5px,#00ff32 64.5px,#02ff00 85.5px,#46ff00 135.5px,#82ff00 194.5px,#56ff00 216.5px,#00ff02 227.5px,#00fffe 259.5px,#00ccff 280.5px,#00fffe 298.5px,#00ffba 322.5px)"></i><i style="top:87px;height:1px;background:linear-gradient(90deg,#00a4ff 0.5px,#0078ff 23.5px,#00fcff 39.5px,#00ff32 65.5px,#02ff00 86.5px,#3eff00 130.5px,#82ff00 193.5px,#52ff00 217.5px,#02ff00 227.5px,#00fffa 259.5px,#00fcff 263.5px,#00d0ff 281.5px,#00fffe 298.5px,#00ffba 322.5px)"></i><i style="top:88px;height:1px;background:linear-gradient(90deg,#00a8ff 0.5px,#007cff 24.5px,#00fffe 40.5px,#00ff3a 64.5px,#00ff12 79.5px,#02ff00 88.5px,#42ff00 135.5px,#7eff00 194.5px,#4eff00 218.5px,#00ff02 228.5px,#00fff6 259.5px,#00fcff 265.5px,#00d0ff 282.5px,#00fffe 299.5px,#00ffba 322.5px)"></i><i style="top:89px;height:1px;background:linear-gradient(90deg,#00b0ff 0.5px,#0084ff 25.5px,#00fffe 40.5px,#00ff3a 64.5px,#02ff00 89.5px,#3eff00 133.5px,#7eff00 193.5px,#4aff00 219.5px,#02ff00 228.5px,#00ffee 258.5px,#00fcff 266.5px,#00d4ff 283.5px,#00fffe 299.5px,#00ffba 322.5px)"></i><i style="top:90px;height:1px;background:linear-gradient(90deg,#00b8ff 0.5px,#0088ff 26.5px,#00fcff 40.5px,#00ff3a 65.5px,#02ff00 90.5px,#46ff00 142.5px,#7aff00 194.5px,#46ff00 220.5px,#00ff02 229.5px,#00ffea 258.5px,#00fcff 268.5px,#00d4ff 284.5px,#00fffe 300.5px,#00ffbe 322.5px)"></i><i style="top:91px;height:1px;background:linear-gradient(90deg,#00c0ff 0.5px,#008cff 27.5px,#00fffe 41.5px,#00ff42 64.5px,#02ff00 91.5px,#3eff00 137.5px,#7aff00 193.5px,#46ff00 220.5px,#02ff00 229.5px,#00ffe6 258.5px,#00fcff 270.5px,#00d8ff 285.5px,#00fffe 300.5px,#00ffbe 322.5px)"></i><i style="top:92px;height:1px;background:linear-gradient(90deg,#00c8ff 0.5px,#0094ff 27.5px,#0094ff 28.5px,#00fcff 41.5px,#00ff42 65.5px,#02ff00 92.5px,#3aff00 135.5px,#76ff00 193.5px,#42ff00 221.5px,#00ff02 230.5px,#00ffe2 258.5px,#00fcff 272.5px,#00d8ff 286.5px,#00fffe 300.5px,#00ffbe 322.5px)"></i><i style="top:93px;height:1px;background:linear-gradient(90deg,#00ccff 0.5px,#0098ff 29.5px,#00fcff 41.5px,#00ff46 64.5px,#02ff00 94.5px,#3eff00 140.5px,#76ff00 194.5px,#3aff00 223.5px,#02ff00 230.5px,#00ffde 258.5px,#00fcff 273.5px,#00dcff 287.5px,#00e8ff 292.5px,#00fffe 301.5px,#00ffc2 322.5px)"></i><i style="top:94px;height:1px;background:linear-gradient(90deg,#00d4ff 0.5px,#009cff 30.5px,#00fffe 42.5px,#00ff4a 64.5px,#02ff00 95.5px,#36ff00 135.5px,#66ff00 180.5px,#72ff00 194.5px,#3aff00 223.5px,#00ff02 231.5px,#00ffda 258.5px,#00fcff 275.5px,#00dcff 289.5px,#00fffe 301.5px,#00ffc2 322.5px)"></i><i style="top:95px;height:1px;background:linear-gradient(90deg,#00dcff 0.5px,#00a4ff 30.5px,#00a4ff 31.5px,#00fcff 42.5px,#00ff4a 65.5px,#02ff00 96.5px,#3aff00 140.5px,#72ff00 194.5px,#32ff00 225.5px,#02ff00 231.5px,#00ffd2 258.5px,#00fcff 276.5px,#00dcff 289.5px,#00fffe 301.5px,#00ffc2 322.5px)"></i><i style="top:96px;height:1px;background:linear-gradient(90deg,#00e4ff 0.5px,#00a8ff 32.5px,#00fffe 43.5px,#00ff52 64.5px,#02ff00 97.5px,#36ff00 138.5px,#6eff00 193.5px,#32ff00 225.5px,#00ff02 232.5px,#00ffce 258.5px,#00fcff 278.5px,#00e0ff 291.5px,#00fffe 302.5px,#00ffc2 322.5px)"></i><i style="top:97px;height:1px;background:linear-gradient(90deg,#00e8ff 0.5px,#00acff 33.5px,#00fffe 43.5px,#00ff52 64.5px,#02ff00 98.5px,#36ff00 140.5px,#6eff00 194.5px,#2aff00 227.5px,#02ff00 232.5px,#00ffca 258.5px,#00fcff 280.5px,#00e0ff 291.5px,#00fffe 302.5px,#00ffc6 322.5px)"></i><i style="top:98px;height:1px;background:linear-gradient(90deg,#00f0ff 0.5px,#00b0ff 34.5px,#00fcff 43.5px,#00ff52 65.5px,#00ff02 99.5px,#32ff00 138.5px,#6eff00 193.5px,#26ff00 228.5px,#00ff02 233.5px,#00ffca 259.5px,#00fffe 281.5px,#00e4ff 292.5px,#00fffe 303.5px,#00ffc6 322.5px)"></i><i style="top:99px;height:1px;background:linear-gradient(90deg,#00f8ff 0.5px,#00b8ff 35.5px,#00fffe 44.5px,#00ff5a 64.5px,#02ff00 101.5px,#2eff00 136.5px,#6aff00 194.5px,#2aff00 228.5px,#00ff02 234.5px,#00ffc6 259.5px,#00fcff 283.5px,#00e4ff 293.5px,#00fffe 303.5px,#00ffc6 322.5px)"></i><i style="top:100px;height:1px;background:linear-gradient(90deg,#00fffe 0.5px,#00bcff 36.5px,#00fcff 44.5px,#00ff5a 65.5px,#00ff02 101.5px,#2eff00 138.5px,#66ff00 191.5px,#6aff00 193.5px,#22ff00 230.5px,#02ff00 234.5px,#00ffc2 259.5px,#00fcff 285.5px,#00e8ff 294.5px,#00fffa 304.5px,#00ffca 322.5px)"></i><i style="top:101px;height:1px;background:linear-gradient(90deg,#00fff6 0.5px,#00fcff 6.5px,#00c0ff 37.5px,#00fcff 44.5px,#00ff5e 64.5px,#00ff02 102.5px,#2eff00 140.5px,#5eff00 185.5px,#66ff00 194.5px,#1eff00 231.5px,#00ff02 235.5px,#00ffbe 259.5px,#00fcff 287.5px,#00e8ff 295.5px,#00fffe 304.5px,#00ffca 322.5px)"></i><i style="top:102px;height:1px;background:linear-gradient(90deg,#00fff2 0.5px,#00fcff 9.5px,#00c8ff 37.5px,#00c8ff 38.5px,#00fffe 45.5px,#00ff62 64.5px,#00ff02 103.5px,#2aff00 138.5px,#62ff00 191.5px,#66ff00 193.5px,#1aff00 232.5px,#02ff00 235.5px,#00ffba 259.5px,#00fffe 288.5px,#00ecff 296.5px,#00f8ff 301.5px,#00fff6 307.5px,#00ffca 322.5px)"></i><i style="top:103px;height:1px;background:linear-gradient(90deg,#00ffea 0.5px,#00fcff 13.5px,#00ccff 39.5px,#00fcff 45.5px,#00ff62 65.5px,#00ff02 105.5px,#26ff00 136.5px,#5eff00 189.5px,#62ff00 194.5px,#16ff00 233.5px,#00ff02 236.5px,#00ffb6 259.5px,#00fcff 290.5px,#00ecff 298.5px,#00fffe 305.5px,#00ffca 322.5px)"></i><i style="top:104px;height:1px;background:linear-gradient(90deg,#00ffe2 0.5px,#00fcff 16.5px,#00d0ff 40.5px,#00fffe 46.5px,#00ff6a 64.5px,#00ff02 106.5px,#2eff00 145.5px,#62ff00 194.5px,#12ff00 234.5px,#02ff00 236.5px,#00ffb2 259.5px,#00fcff 292.5px,#00ecff 298.5px,#00fffe 305.5px,#00ffce 322.5px)"></i><i style="top:105px;height:1px;background:linear-gradient(90deg,#00ffda 0.5px,#00fcff 20.5px,#00d4ff 41.5px,#00fffe 46.5px,#00ff6a 64.5px,#00ff02 107.5px,#2eff00 147.5px,#5eff00 193.5px,#0eff00 235.5px,#00ff02 237.5px,#00ffaa 258.5px,#00fffe 293.5px,#00f0ff 300.5px,#00fffa 306.5px,#00ffce 322.5px)"></i><i style="top:106px;height:1px;background:linear-gradient(90deg,#00ffd6 0.5px,#00fcff 23.5px,#00dcff 42.5px,#00fffa 47.5px,#00ff6e 64.5px,#00ff02 108.5px,#0eff00 122.5px,#26ff00 141.5px,#5eff00 194.5px,#0aff00 236.5px,#00ff06 238.5px,#00ffa6 258.5px,#00fcff 295.5px,#00f0ff 300.5px,#00fffe 306.5px,#00ffce 322.5px)"></i><i style="top:107px;height:1px;background:linear-gradient(90deg,#00ffce 0.5px,#00fcff 27.5px,#00e0ff 43.5px,#00fffe 47.5px,#00ff72 64.5px,#00ff02 110.5px,#3eff00 165.5px,#5aff00 194.5px,#0aff00 236.5px,#00ff02 238.5px,#00ffa2 258.5px,#00fcff 297.5px,#00f4ff 302.5px,#00fffa 307.5px,#00ffce 322.5px)"></i><i style="top:108px;height:1px;background:linear-gradient(90deg,#00ffc6 0.5px,#00fcff 31.5px,#00e4ff 44.5px,#00fffe 47.5px,#00ff72 65.5px,#00ff06 109.5px,#06ff00 119.5px,#16ff00 130.5px,#52ff00 186.5px,#5aff00 194.5px,#06ff00 237.5px,#00ff06 239.5px,#00ff9e 258.5px,#00fcff 299.5px,#00f4ff 302.5px,#00fffa 308.5px,#00ffd2 322.5px)"></i><i style="top:109px;height:1px;background:linear-gradient(90deg,#00ffbe 0.5px,#00fffe 34.5px,#00ecff 45.5px,#00fffa 48.5px,#00ff76 64.5px,#00ff02 112.5px,#0eff00 126.5px,#4aff00 180.5px,#56ff00 194.5px,#00ff02 239.5px,#00ff9a 258.5px,#00fffe 300.5px,#00f8ff 304.5px,#00fffa 308.5px,#00ffd2 322.5px)"></i><i style="top:110px;height:1px;background:linear-gradient(90deg,#00ffb6 0.5px,#00fcff 38.5px,#00f0ff 46.5px,#00fffe 48.5px,#00ff7a 64.5px,#00ff06 112.5px,#06ff00 121.5px,#1eff00 141.5px,#56ff00 194.5px,#00ff02 239.5px,#00ff96 258.5px,#00fcff 302.5px,#00f8ff 304.5px,#00fff6 310.5px,#00ffd2 322.5px)"></i><i style="top:111px;height:1px;background:linear-gradient(90deg,#00ffb2 0.5px,#00fcff 42.5px,#00f4ff 47.5px,#00fffa 49.5px,#00ff7e 64.5px,#00ff06 113.5px,#06ff00 123.5px,#1aff00 139.5px,#56ff00 193.5px,#00ff02 238.5px,#00ff0a 241.5px,#00ff8e 258.5px,#00fcff 304.5px,#00fffa 309.5px,#00ffd6 322.5px)"></i><i style="top:112px;height:1px;background:linear-gradient(90deg,#00ffaa 0.5px,#00fcff 46.5px,#00fffa 49.5px,#00ff7e 65.5px,#00ff0a 112.5px,#06ff00 122.5px,#52ff00 193.5px,#00ff02 238.5px,#00ff0e 242.5px,#00ff8a 258.5px,#00fffe 305.5px,#00fffa 309.5px,#00ffd6 322.5px)"></i><i style="top:113px;height:1px;background:linear-gradient(90deg,#00ffa2 0.5px,#00fffe 49.5px,#00ff82 64.5px,#00ff06 116.5px,#06ff00 126.5px,#16ff00 139.5px,#52ff00 193.5px,#00ff02 237.5px,#00ff12 243.5px,#00ff86 258.5px,#00fffe 307.5px,#00ffea 315.5px,#00ffd6 322.5px)"></i><i style="top:114px;height:1px;background:linear-gradient(90deg,#00ff9a 0.5px,#00fffa 50.5px,#00ff86 64.5px,#00ff06 116.5px,#06ff00 127.5px,#4aff00 189.5px,#4eff00 194.5px,#00ff02 236.5px,#00ff12 244.5px,#00ff86 259.5px,#00fffe 308.5px,#00ffd6 322.5px)"></i><i style="top:115px;height:1px;background:linear-gradient(90deg,#00ff92 0.5px,#00fff6 51.5px,#00ff8a 64.5px,#00ff0a 116.5px,#06ff00 128.5px,#46ff00 187.5px,#4eff00 193.5px,#00ff02 235.5px,#00ff16 245.5px,#00ff82 259.5px,#00fffe 309.5px,#00ffda 322.5px)"></i><i style="top:116px;height:1px;background:linear-gradient(90deg,#00ff8e 0.5px,#00ffee 52.5px,#00ff8a 65.5px,#00ff0a 117.5px,#06ff00 129.5px,#4aff00 194.5px,#00ff02 234.5px,#00ff1a 246.5px,#00ff7e 259.5px,#00fffa 310.5px,#00ffda 322.5px)"></i><i style="top:117px;height:1px;background:linear-gradient(90deg,#00ff86 0.5px,#00ffea 53.5px,#00ff8e 64.5px,#00ff0a 119.5px,#06ff00 129.5px,#4aff00 194.5px,#00ff02 232.5px,#00ff1e 247.5px,#00ff7a 259.5px,#00fffa 311.5px,#00ffda 322.5px)"></i><i style="top:118px;height:1px;background:linear-gradient(90deg,#00ff7e 0.5px,#00ffe6 54.5px,#00ff92 64.5px,#00ff0a 120.5px,#06ff00 132.5px,#46ff00 193.5px,#00ff02 232.5px,#00ff22 248.5px,#00ff76 259.5px,#00fff6 312.5px,#00ffda 322.5px)"></i><i style="top:119px;height:1px;background:linear-gradient(90deg,#00ff76 0.5px,#00ffde 54.5px,#00ffde 55.5px,#00ff92 65.5px,#00ff0a 121.5px,#06ff00 133.5px,#46ff00 194.5px,#00ff02 231.5px,#00ff26 249.5px,#00ff72 259.5px,#00fff6 313.5px,#00ffde 322.5px)"></i><i style="top:120px;height:1px;background:linear-gradient(90deg,#00ff72 0.5px,#00ffda 56.5px,#00ff96 65.5px,#00ff0a 122.5px,#06ff00 136.5px,#42ff00 193.5px,#06ff00 226.5px,#00ff0a 235.5px,#00ff2a 250.5px,#00ff6e 259.5px,#00fff2 314.5px,#00ffe6 319.5px,#00ffde 322.5px)"></i><i style="top:121px;height:1px;background:linear-gradient(90deg,#00ff6a 0.5px,#00ffd6 57.5px,#00ff9a 64.5px,#00ff0a 123.5px,#02ff00 135.5px,#42ff00 194.5px,#00ff02 229.5px,#00ff2e 251.5px,#00ff66 258.5px,#00fff2 316.5px,#00ffde 322.5px)"></i><i style="top:122px;height:1px;background:linear-gradient(90deg,#00ff62 0.5px,#00ffce 57.5px,#00ffce 58.5px,#00ff9a 65.5px,#00ff0e 123.5px,#02ff00 137.5px,#42ff00 193.5px,#00ff02 228.5px,#00ff32 252.5px,#00ff62 258.5px,#00ffee 316.5px,#00ffe2 322.5px)"></i><i style="top:123px;height:1px;background:linear-gradient(90deg,#00ff5a 0.5px,#00ffca 59.5px,#00ff9e 65.5px,#00ff0e 124.5px,#02ff00 139.5px,#3eff00 194.5px,#00ff02 227.5px,#00ff32 252.5px,#00ff5e 258.5px,#00ffee 317.5px,#00ffe2 322.5px)"></i><i style="top:124px;height:1px;background:linear-gradient(90deg,#00ff52 0.5px,#00ffc6 60.5px,#00ffa2 65.5px,#00ff0a 127.5px,#06ff00 144.5px,#3eff00 193.5px,#00ff02 226.5px,#00ff36 253.5px,#00ff5a 258.5px,#00ffee 318.5px,#00ffe2 322.5px)"></i><i style="top:125px;height:1px;background:linear-gradient(90deg,#00ff4e 0.5px,#00ffc2 61.5px,#00ffa6 64.5px,#00ff0e 127.5px,#02ff00 142.5px,#3aff00 194.5px,#00ff02 225.5px,#00ff3a 254.5px,#00ff56 258.5px,#00ffea 320.5px,#00ffe2 322.5px)"></i><i style="top:126px;height:1px;background:linear-gradient(90deg,#00ff46 0.5px,#00ffba 62.5px,#00ffa6 65.5px,#00ff0e 128.5px,#02ff00 144.5px,#3aff00 193.5px,#00ff02 224.5px,#00ff3e 255.5px,#00ff52 258.5px,#00ffea 320.5px,#00ffe6 322.5px)"></i><i style="top:127px;height:1px;background:linear-gradient(90deg,#00ff3e 0.5px,#00ffb6 63.5px,#00ffaa 65.5px,#00ff0e 129.5px,#02ff00 146.5px,#36ff00 194.5px,#00ff02 223.5px,#00ff42 256.5px,#00ff5a 263.5px,#00ffe6 321.5px,#00ffe6 322.5px)"></i><i style="top:128px;height:1px;background:linear-gradient(90deg,#00ff36 0.5px,#00ffb2 64.5px,#00ff0e 130.5px,#02ff00 148.5px,#36ff00 193.5px,#00ff02 222.5px,#00ff4a 259.5px,#00ffe6 322.5px)"></i><i style="top:129px;height:1px;background:linear-gradient(90deg,#00ff32 0.5px,#00ff2e 1.5px,#00ffa6 64.5px,#00ffb2 65.5px,#00ff12 131.5px,#02ff00 151.5px,#32ff00 195.5px,#00ff02 222.5px,#00ff4a 260.5px,#00ffe2 322.5px)"></i><i style="top:130px;height:1px;background:linear-gradient(90deg,#00ff2e 0.5px,#00ff26 1.5px,#00ff9e 64.5px,#00ffb6 66.5px,#00ff16 131.5px,#02ff00 154.5px,#32ff00 195.5px,#00ff02 222.5px,#00ff46 258.5px,#00ff66 272.5px,#00ffe2 322.5px)"></i><i style="top:131px;height:1px;background:linear-gradient(90deg,#00ff2e 0.5px,#00ff1e 2.5px,#00ff5a 35.5px,#00ff92 64.5px,#00ffba 67.5px,#00ff16 133.5px,#02ff00 158.5px,#2eff00 197.5px,#00ff02 222.5px,#00ff46 258.5px,#00ff4e 263.5px,#00ffde 322.5px)"></i><i style="top:132px;height:1px;background:linear-gradient(90deg,#00ff2e 0.5px,#00ff16 3.5px,#00ff32 20.5px,#00ff86 64.5px,#00ffba 68.5px,#00ff1a 134.5px,#02ff00 161.5px,#2aff00 196.5px,#2eff00 197.5px,#00ff02 221.5px,#00ff46 258.5px,#00ff4e 264.5px,#00ffde 322.5px)"></i><i style="top:133px;height:1px;background:linear-gradient(90deg,#00ff2a 0.5px,#00ff0a 5.5px,#00ff7e 64.5px,#00ffbe 69.5px,#00ff1e 134.5px,#02ff00 165.5px,#26ff00 196.5px,#2aff00 199.5px,#00ff02 221.5px,#00ff4a 260.5px,#00ff4e 265.5px,#00ffda 322.5px)"></i><i style="top:134px;height:1px;background:linear-gradient(90deg,#00ff2a 0.5px,#00ff06 5.5px,#00ff02 6.5px,#00ff72 64.5px,#00ffc2 70.5px,#00ff22 135.5px,#02ff00 167.5px,#22ff00 196.5px,#26ff00 201.5px,#00ff02 221.5px,#00ff4a 260.5px,#00ff4e 266.5px,#00ffda 322.5px)"></i><i style="top:135px;height:1px;background:linear-gradient(90deg,#00ff26 0.5px,#00ff02 5.5px,#06ff00 7.5px,#00ff06 14.5px,#00ff66 64.5px,#00ffc2 71.5px,#00ff22 137.5px,#02ff00 172.5px,#1eff00 196.5px,#26ff00 201.5px,#00ff02 221.5px,#00ff4a 260.5px,#00ff4e 267.5px,#00ffd6 322.5px)"></i><i style="top:136px;height:1px;background:linear-gradient(90deg,#00ff26 0.5px,#00ff02 5.5px,#0eff00 7.5px,#00ff02 17.5px,#00ff5e 64.5px,#00ffc6 72.5px,#00ff26 137.5px,#02ff00 175.5px,#1eff00 198.5px,#22ff00 203.5px,#00ff02 221.5px,#00ff4a 260.5px,#00ff4e 267.5px,#00ffd6 322.5px)"></i><i style="top:137px;height:1px;background:linear-gradient(90deg,#00ff26 0.5px,#00ff02 5.5px,#16ff00 8.5px,#00ff02 23.5px,#00ff52 64.5px,#00ffca 73.5px,#00ff2a 138.5px,#02ff00 178.5px,#1aff00 198.5px,#22ff00 202.5px,#00ff02 221.5px,#00ff4a 259.5px,#00ff4e 268.5px,#00ffd2 322.5px)"></i><i style="top:138px;height:1px;background:linear-gradient(90deg,#00ff22 0.5px,#02ff00 5.5px,#22ff00 10.5px,#00ff02 28.5px,#00ff46 64.5px,#00ffca 74.5px,#00ff2e 138.5px,#02ff00 181.5px,#16ff00 198.5px,#1eff00 204.5px,#00ff02 221.5px,#00ff4a 259.5px,#00ff4e 269.5px,#00ffd2 322.5px)"></i><i style="top:139px;height:1px;background:linear-gradient(90deg,#00ff22 0.5px,#02ff00 5.5px,#26ff00 10.5px,#2aff00 11.5px,#00ff02 34.5px,#00ff3e 64.5px,#00ffce 75.5px,#00ff2e 141.5px,#02ff00 185.5px,#1aff00 203.5px,#1eff00 204.5px,#00ff02 221.5px,#00ff4a 259.5px,#00ff4e 270.5px,#00ffce 322.5px)"></i><i style="top:140px;height:1px;background:linear-gradient(90deg,#00ff22 0.5px,#00ff02 4.5px,#0aff00 6.5px,#32ff00 11.5px,#00ff02 39.5px,#00ff32 64.5px,#00ffd2 76.5px,#00ff32 141.5px,#02ff00 188.5px,#12ff00 200.5px,#1aff00 206.5px,#00ff02 221.5px,#00ff4a 259.5px,#00ff4e 270.5px,#00ffce 322.5px)"></i><i style="top:141px;height:1px;background:linear-gradient(90deg,#00ff1e 0.5px,#00ff02 4.5px,#3aff00 12.5px,#00ff02 45.5px,#00ff26 64.5px,#00ffd2 77.5px,#00ff32 144.5px,#02ff00 192.5px,#1aff00 206.5px,#00ff02 220.5px,#00ff4a 259.5px,#00ff52 273.5px,#00ffca 322.5px)"></i><i style="top:142px;height:1px;background:linear-gradient(90deg,#00ff1e 0.5px,#00ff02 4.5px,#42ff00 13.5px,#26ff00 30.5px,#00ff02 50.5px,#00ff1e 64.5px,#00ffd6 78.5px,#00ff36 144.5px,#02ff00 195.5px,#16ff00 208.5px,#00ff02 220.5px,#00ff4a 259.5px,#00ff52 274.5px,#00ffca 322.5px)"></i><i style="top:143px;height:1px;background:linear-gradient(90deg,#00ff1e 0.5px,#02ff00 4.5px,#4eff00 15.5px,#00ff02 55.5px,#00ff12 64.5px,#00ffda 79.5px,#00ff3a 144.5px,#02ff00 198.5px,#16ff00 208.5px,#00ff02 220.5px,#00ff4a 259.5px,#00ff52 274.5px,#00ffc6 322.5px)"></i><i style="top:144px;height:1px;background:linear-gradient(90deg,#00ff1a 0.5px,#02ff00 4.5px,#52ff00 15.5px,#56ff00 16.5px,#00ff02 61.5px,#00ff06 64.5px,#00ffde 80.5px,#00ff3a 146.5px,#00ff06 195.5px,#06ff00 202.5px,#12ff00 210.5px,#00ff02 220.5px,#00ff4a 258.5px,#00ff52 275.5px,#00ffc6 322.5px)"></i><i style="top:145px;height:1px;background:linear-gradient(90deg,#00ff1a 0.5px,#02ff00 4.5px,#5aff00 16.5px,#5eff00 17.5px,#02ff00 64.5px,#00ff4a 70.5px,#00ffde 81.5px,#00ff3e 147.5px,#00ff0a 195.5px,#06ff00 204.5px,#0eff00 211.5px,#00ff02 220.5px,#00ff4a 258.5px,#00ff52 276.5px,#00ffc2 322.5px)"></i><i style="top:146px;height:1px;background:linear-gradient(90deg,#00ff1a 0.5px,#00ff02 3.5px,#66ff00 17.5px,#22ff00 54.5px,#0eff00 64.5px,#02ff00 65.5px,#00ffe2 82.5px,#00ff42 147.5px,#00ff0e 195.5px,#02ff00 205.5px,#0eff00 212.5px,#00ff02 220.5px,#00ff4a 258.5px,#00ff52 277.5px,#00ffc2 322.5px)"></i><i style="top:147px;height:1px;background:linear-gradient(90deg,#00ff16 0.5px,#00ff02 3.5px,#6eff00 18.5px,#4aff00 39.5px,#1aff00 64.5px,#00ff02 66.5px,#00ffe6 83.5px,#00ff42 149.5px,#00ff12 195.5px,#02ff00 207.5px,#0aff00 214.5px,#00ff06 221.5px,#00ff4e 260.5px,#00ff52 278.5px,#00ffc2 322.5px)"></i><i style="top:148px;height:1px;background:linear-gradient(90deg,#00ff16 0.5px,#02ff00 3.5px,#76ff00 19.5px,#7aff00 20.5px,#22ff00 64.5px,#00ff02 67.5px,#00ffe6 84.5px,#00ff46 150.5px,#00ff12 197.5px,#02ff00 209.5px,#0aff00 213.5px,#00ff06 222.5px,#00ff4e 260.5px,#00ff52 278.5px,#00ffbe 322.5px)"></i><i style="top:149px;height:1px;background:linear-gradient(90deg,#00ff16 0.5px,#02ff00 3.5px,#7eff00 20.5px,#82ff00 21.5px,#2eff00 64.5px,#06ff00 67.5px,#00ff12 69.5px,#00ffea 85.5px,#00ff4a 150.5px,#00ff16 197.5px,#02ff00 211.5px,#06ff00 215.5px,#00ff06 222.5px,#00ff4e 259.5px,#00ff52 279.5px,#00ffbe 322.5px)"></i><i style="top:150px;height:1px;background:linear-gradient(90deg,#00ff12 0.5px,#02ff00 3.5px,#86ff00 21.5px,#8aff00 22.5px,#3aff00 64.5px,#06ff00 68.5px,#00ff22 71.5px,#00ffee 86.5px,#00ff4e 151.5px,#00ff1a 197.5px,#02ff00 213.5px,#06ff00 215.5px,#00ff0a 224.5px,#00ff4e 259.5px,#00ff52 280.5px,#00ffba 322.5px)"></i><i style="top:151px;height:1px;background:linear-gradient(90deg,#00ff12 0.5px,#06ff00 3.5px,#92ff00 22.5px,#4eff00 59.5px,#46ff00 64.5px,#02ff00 69.5px,#00ffee 87.5px,#00ff4e 153.5px,#00ff22 194.5px,#02ff00 216.5px,#00ff22 236.5px,#00ff4e 260.5px,#00ff56 282.5px,#00ffba 322.5px)"></i><i style="top:152px;height:1px;background:linear-gradient(90deg,#00ff12 0.5px,#06ff00 3.5px,#9aff00 23.5px,#76ff00 44.5px,#4eff00 64.5px,#00ff02 70.5px,#00fff2 88.5px,#00ff52 153.5px,#00ff26 194.5px,#02ff00 217.5px,#00ff4e 260.5px,#00ff56 283.5px,#00ffb6 322.5px)"></i><i style="top:153px;height:1px;background:linear-gradient(90deg,#00ff0e 0.5px,#06ff00 3.5px,#a2ff00 24.5px,#a6ff00 25.5px,#5aff00 64.5px,#00ff02 71.5px,#00fff6 89.5px,#00ff56 154.5px,#00ff26 197.5px,#00ff02 219.5px,#00ff4e 259.5px,#00ff56 284.5px,#00ffb6 322.5px)"></i><i style="top:154px;height:1px;background:linear-gradient(90deg,#00ff0e 0.5px,#02ff00 2.5px,#aaff00 25.5px,#aeff00 26.5px,#66ff00 64.5px,#06ff00 71.5px,#00ff12 73.5px,#00fff6 90.5px,#00ff5a 154.5px,#00ff2a 197.5px,#00ff06 219.5px,#00ff3a 248.5px,#00ff4e 259.5px,#00ff56 285.5px,#00ffb2 322.5px)"></i><i style="top:155px;height:1px;background:linear-gradient(90deg,#00ff0e 0.5px,#02ff00 2.5px,#b2ff00 26.5px,#b6ff00 27.5px,#6eff00 64.5px,#06ff00 72.5px,#00ff22 75.5px,#00fffa 91.5px,#00ff5a 157.5px,#00ff2a 199.5px,#00ff06 221.5px,#00ff4e 259.5px,#00ff56 285.5px,#00ffb2 322.5px)"></i><i style="top:156px;height:1px;background:linear-gradient(90deg,#00ff0a 0.5px,#02ff00 2.5px,#beff00 27.5px,#7aff00 64.5px,#02ff00 73.5px,#00fffe 92.5px,#00ff5e 157.5px,#00ff32 196.5px,#00ff0a 221.5px,#00ff4e 259.5px,#00ff56 286.5px,#00ffae 322.5px)"></i><i style="top:157px;height:1px;background:linear-gradient(90deg,#00ff0a 0.5px,#06ff00 2.5px,#c6ff00 28.5px,#a2ff00 49.5px,#86ff00 64.5px,#00ff02 74.5px,#00fffe 93.5px,#00ff5e 160.5px,#00ff36 196.5px,#00ff0a 223.5px,#00ff4e 258.5px,#00ff5a 289.5px,#00ffae 322.5px)"></i><i style="top:158px;height:1px;background:linear-gradient(90deg,#00ff0a 0.5px,#06ff00 2.5px,#ceff00 29.5px,#caff00 34.5px,#8eff00 64.5px,#00ff02 75.5px,#00fff6 93.5px,#00fcff 94.5px,#00ffea 104.5px,#00ff62 160.5px,#00ff3a 196.5px,#00ff0e 224.5px,#00ff4e 259.5px,#00ff5a 289.5px,#00ffaa 322.5px)"></i><i style="top:159px;height:1px;background:linear-gradient(90deg,#00ff06 0.5px,#06ff00 2.5px,#d6ff00 30.5px,#daff00 31.5px,#9aff00 64.5px,#06ff00 75.5px,#00ff12 77.5px,#00fff6 94.5px,#00f8ff 95.5px,#00fff6 101.5px,#00ff66 160.5px,#00ff3e 196.5px,#00ff0e 224.5px,#00ff4e 258.5px,#00ff5a 290.5px,#00ffaa 322.5px)"></i><i style="top:160px;height:1px;background:linear-gradient(90deg,#00ff06 0.5px,#0aff00 2.5px,#deff00 31.5px,#e2ff00 32.5px,#a6ff00 64.5px,#06ff00 76.5px,#00ff22 79.5px,#00fffa 95.5px,#00f8ff 97.5px,#00fff6 103.5px,#00ff66 162.5px,#00ff42 196.5px,#00ff12 225.5px,#00ff4e 258.5px,#00ff5a 291.5px,#00ffa6 322.5px)"></i><i style="top:161px;height:1px;background:linear-gradient(90deg,#00ff06 0.5px,#0aff00 2.5px,#e6ff00 32.5px,#eaff00 34.5px,#aeff00 64.5px,#6eff00 69.5px,#02ff00 77.5px,#00fffe 96.5px,#00f4ff 97.5px,#00fffa 104.5px,#00ff6a 163.5px,#00ff46 196.5px,#00ff12 226.5px,#00ff4e 258.5px,#00ff5a 292.5px,#00ffa6 322.5px)"></i><i style="top:162px;height:1px;background:linear-gradient(90deg,#00ff02 0.5px,#22ff00 5.5px,#f2ff00 33.5px,#ceff00 54.5px,#baff00 64.5px,#00ff02 78.5px,#00fffe 97.5px,#00f0ff 98.5px,#00fffe 105.5px,#00ff6e 163.5px,#00ff46 198.5px,#00ff16 228.5px,#00ff52 260.5px,#00ff5a 293.5px,#00ffa2 322.5px)"></i><i style="top:163px;height:1px;background:linear-gradient(90deg,#00ff02 0.5px,#faff00 34.5px,#f6ff00 39.5px,#c6ff00 64.5px,#0aff00 78.5px,#00ff02 79.5px,#00fff6 97.5px,#00fcff 98.5px,#00f0ff 99.5px,#00fffa 108.5px,#00ff6e 165.5px,#00ff4e 196.5px,#00ff16 228.5px,#00ff52 260.5px,#00ff5a 293.5px,#00ffa2 322.5px)"></i><i style="top:164px;height:1px;background:linear-gradient(90deg,#00ff02 0.5px,#faff00 34.5px,#fff800 36.5px,#faff00 42.5px,#ceff00 64.5px,#8eff00 69.5px,#06ff00 79.5px,#00ff12 81.5px,#00fff6 98.5px,#00f8ff 99.5px,#00ecff 100.5px,#00fffa 110.5px,#00ff72 166.5px,#00ff4e 198.5px,#00ff1a 230.5px,#00ff52 260.5px,#00ff5a 294.5px,#00ff9e 322.5px)"></i><i style="top:165px;height:1px;background:linear-gradient(90deg,#02ff00 0.5px,#feff00 34.5px,#fff000 37.5px,#feff00 46.5px,#daff00 64.5px,#06ff00 80.5px,#00ff22 83.5px,#00fffa 99.5px,#00f8ff 100.5px,#00e8ff 101.5px,#00fffe 111.5px,#00ff76 166.5px,#00ff52 198.5px,#00ff1e 230.5px,#00ff52 260.5px,#00ff5a 295.5px,#00ff9e 322.5px)"></i><i style="top:166px;height:1px;background:linear-gradient(90deg,#02ff00 0.5px,#feff00 34.5px,#ffe800 38.5px,#faff00 52.5px,#e6ff00 64.5px,#02ff00 81.5px,#00fffe 100.5px,#00e8ff 102.5px,#00fffe 113.5px,#00ff7a 167.5px,#00ff5a 195.5px,#00ff1e 232.5px,#00ff52 259.5px,#00ff5e 297.5px,#00ff9a 322.5px)"></i><i style="top:167px;height:1px;background:linear-gradient(90deg,#06ff00 0.5px,#feff00 34.5px,#ffe000 38.5px,#feff00 57.5px,#eeff00 64.5px,#86ff00 72.5px,#00ff02 82.5px,#00fffe 101.5px,#00e4ff 103.5px,#00fffe 115.5px,#00ff7a 169.5px,#00ff5e 195.5px,#00ff22 233.5px,#00ff52 259.5px,#00ff5e 298.5px,#00ff9a 322.5px)"></i><i style="top:168px;height:1px;background:linear-gradient(90deg,#06ff00 0.5px,#fffc00 34.5px,#ffd800 39.5px,#ffdc00 44.5px,#feff00 62.5px,#faff00 64.5px,#0aff00 82.5px,#00ff02 83.5px,#00fff6 101.5px,#00fcff 102.5px,#00e0ff 104.5px,#00fffe 117.5px,#00ff7e 170.5px,#00ff62 195.5px,#00ff22 234.5px,#00ff52 259.5px,#00ff5e 299.5px,#00ff96 322.5px)"></i><i style="top:169px;height:1px;background:linear-gradient(90deg,#06ff00 0.5px,#faff00 33.5px,#ffe800 37.5px,#ffcc00 41.5px,#fff800 64.5px,#faff00 65.5px,#06ff00 83.5px,#00ff12 85.5px,#00fff6 102.5px,#00f8ff 103.5px,#00e0ff 105.5px,#00fffe 119.5px,#00ff82 170.5px,#00ff66 195.5px,#00ff26 234.5px,#00ff52 259.5px,#00ff5e 300.5px,#00ff96 322.5px)"></i><i style="top:170px;height:1px;background:linear-gradient(90deg,#0aff00 0.5px,#faff00 33.5px,#ffe400 37.5px,#ffc400 42.5px,#fff000 64.5px,#fffc00 65.5px,#c2ff00 70.5px,#06ff00 84.5px,#00ff22 87.5px,#00fffa 103.5px,#00f8ff 104.5px,#00dcff 106.5px,#00fffe 122.5px,#00ff82 172.5px,#00ff6a 195.5px,#00ff26 235.5px,#00ff52 259.5px,#00ff5e 300.5px,#00ff92 322.5px)"></i><i style="top:171px;height:1px;background:linear-gradient(90deg,#0aff00 0.5px,#feff00 33.5px,#ffc000 42.5px,#ffbc00 44.5px,#ffe400 64.5px,#fffc00 66.5px,#02ff00 85.5px,#00fffe 104.5px,#00d8ff 107.5px,#00fffe 124.5px,#00ff86 173.5px,#00ff6a 197.5px,#00ff2a 237.5px,#00ff52 259.5px,#00ff5e 301.5px,#00ff92 322.5px)"></i><i style="top:172px;height:1px;background:linear-gradient(90deg,#0aff00 0.5px,#feff00 33.5px,#ffb400 43.5px,#ffd800 64.5px,#feff00 67.5px,#00ff02 86.5px,#00fffe 105.5px,#00d8ff 108.5px,#00dcff 111.5px,#00fffe 126.5px,#00ff8a 173.5px,#00ff6e 197.5px,#00ff2a 237.5px,#00ff52 259.5px,#00ff5e 302.5px,#00ff92 322.5px)"></i><i style="top:173px;height:1px;background:linear-gradient(90deg,#0eff00 0.5px,#feff00 33.5px,#ffac00 44.5px,#ffb000 49.5px,#ffd000 64.5px,#faff00 68.5px,#0aff00 86.5px,#00ff02 87.5px,#00fff6 105.5px,#00fcff 106.5px,#00d4ff 109.5px,#00fffe 128.5px,#00ff8a 175.5px,#00ff72 197.5px,#00ff2e 239.5px,#00ff52 259.5px,#00ff62 304.5px,#00ff8e 322.5px)"></i><i style="top:174px;height:1px;background:linear-gradient(90deg,#0eff00 0.5px,#fffc00 33.5px,#ffa000 46.5px,#ffc400 64.5px,#fff800 68.5px,#faff00 69.5px,#06ff00 87.5px,#00ff12 89.5px,#00fff6 106.5px,#00f8ff 107.5px,#00d0ff 110.5px,#00fffe 130.5px,#00ff8e 176.5px,#00ff76 197.5px,#00ff32 239.5px,#00ff52 259.5px,#00ff62 305.5px,#00ff8e 322.5px)"></i><i style="top:175px;height:1px;background:linear-gradient(90deg,#0eff00 0.5px,#faff00 32.5px,#ffe400 36.5px,#ff9800 47.5px,#ffb800 64.5px,#fffc00 69.5px,#c2ff00 74.5px,#06ff00 88.5px,#00ff22 91.5px,#00fffa 107.5px,#00f8ff 108.5px,#00d0ff 111.5px,#00d4ff 114.5px,#00fffe 132.5px,#00ff92 176.5px,#00ff7a 197.5px,#00ff32 241.5px,#00ff52 258.5px,#00ff62 306.5px,#00ff8a 322.5px)"></i><i style="top:176px;height:1px;background:linear-gradient(90deg,#12ff00 0.5px,#feff00 32.5px,#ffe400 36.5px,#ff9400 47.5px,#ff9000 49.5px,#ffb000 64.5px,#fffc00 70.5px,#02ff00 89.5px,#00fffe 108.5px,#00ccff 112.5px,#00fffe 134.5px,#00ff92 178.5px,#00ff7e 197.5px,#00ff36 241.5px,#00ff56 260.5px,#00ff62 307.5px,#00ff8a 322.5px)"></i><i style="top:177px;height:1px;background:linear-gradient(90deg,#12ff00 0.5px,#feff00 32.5px,#ff8c00 48.5px,#ff8800 50.5px,#ffa400 64.5px,#feff00 71.5px,#00ff02 90.5px,#00fffe 109.5px,#00c8ff 113.5px,#00fffe 136.5px,#00ff96 179.5px,#00ff86 194.5px,#00ff36 243.5px,#00ff56 260.5px,#00ff62 307.5px,#00ff86 322.5px)"></i><i style="top:178px;height:1px;background:linear-gradient(90deg,#12ff00 0.5px,#feff00 32.5px,#ff8000 49.5px,#ff8c00 58.5px,#ff9800 64.5px,#fff400 71.5px,#faff00 72.5px,#0aff00 90.5px,#00ff02 91.5px,#00fff6 109.5px,#00fcff 110.5px,#00c8ff 114.5px,#00ccff 117.5px,#00fffe 139.5px,#00ff9a 179.5px,#00ff82 199.5px,#00ff3a 243.5px,#00ff56 260.5px,#00ff62 308.5px,#00ff86 322.5px)"></i><i style="top:179px;height:1px;background:linear-gradient(90deg,#16ff00 0.5px,#fffc00 32.5px,#ff7400 51.5px,#ff9000 64.5px,#fff800 72.5px,#faff00 73.5px,#06ff00 91.5px,#00ff12 93.5px,#00fff6 110.5px,#00f8ff 111.5px,#00c4ff 115.5px,#00d8ff 124.5px,#00fffe 141.5px,#00ff9a 181.5px,#00ff8e 194.5px,#00ff3a 245.5px,#00ff56 260.5px,#00ff62 309.5px,#00ff82 322.5px)"></i><i style="top:180px;height:1px;background:linear-gradient(90deg,#16ff00 0.5px,#faff00 31.5px,#ffe400 35.5px,#ff7000 51.5px,#ff6c00 52.5px,#ff8400 64.5px,#fffc00 73.5px,#c2ff00 78.5px,#06ff00 92.5px,#00ff22 95.5px,#00fffa 111.5px,#00f8ff 112.5px,#00c0ff 116.5px,#00fffe 143.5px,#00ff9e 182.5px,#00ff8a 199.5px,#00ff3e 245.5px,#00ff56 260.5px,#00ff66 311.5px,#00ff82 322.5px)"></i><i style="top:181px;height:1px;background:linear-gradient(90deg,#16ff00 0.5px,#faff00 31.5px,#ffe400 35.5px,#ff6800 52.5px,#ff6400 54.5px,#ff7800 64.5px,#fffc00 74.5px,#02ff00 93.5px,#00fffe 112.5px,#00c0ff 117.5px,#00c8ff 122.5px,#00fffe 145.5px,#00ffa2 182.5px,#00ff92 196.5px,#00ff3e 246.5px,#00ff56 260.5px,#00ff66 312.5px,#00ff7e 322.5px)"></i><i style="top:182px;height:1px;background:linear-gradient(90deg,#1aff00 0.5px,#feff00 31.5px,#ff6000 53.5px,#ff5c00 55.5px,#ff7000 64.5px,#feff00 75.5px,#00ff02 94.5px,#00fffe 113.5px,#00bcff 118.5px,#00dcff 132.5px,#00fffe 147.5px,#00ffa6 183.5px,#00ff8e 201.5px,#00ff42 248.5px,#00ff56 260.5px,#00ff66 313.5px,#00ff7e 322.5px)"></i><i style="top:183px;height:1px;background:linear-gradient(90deg,#1aff00 0.5px,#feff00 31.5px,#ff5400 54.5px,#ff6000 63.5px,#ff6400 64.5px,#fff400 75.5px,#faff00 76.5px,#0aff00 94.5px,#00ff02 95.5px,#00fff6 113.5px,#00fcff 114.5px,#00b8ff 119.5px,#00fffe 149.5px,#00ffa6 185.5px,#00ff9a 196.5px,#00ff46 248.5px,#00ff56 261.5px,#00ff66 314.5px,#00ff7a 322.5px)"></i><i style="top:184px;height:1px;background:linear-gradient(90deg,#1aff00 0.5px,#fffc00 31.5px,#ff4800 56.5px,#ff5800 64.5px,#fff800 76.5px,#faff00 77.5px,#06ff00 95.5px,#00ff12 97.5px,#00fff6 114.5px,#00f8ff 115.5px,#00b8ff 120.5px,#00c0ff 125.5px,#00fffe 151.5px,#00ffaa 186.5px,#00ff96 201.5px,#00ff46 250.5px,#00ff56 259.5px,#00ff66 315.5px,#00ff7a 322.5px)"></i><i style="top:185px;height:1px;background:linear-gradient(90deg,#1eff00 0.5px,#fffc00 31.5px,#ff4400 56.5px,#ff4000 57.5px,#ff5000 64.5px,#fffc00 77.5px,#c2ff00 82.5px,#06ff00 96.5px,#00ff22 99.5px,#00fffa 115.5px,#00f8ff 116.5px,#00b4ff 121.5px,#00b8ff 124.5px,#00fffe 153.5px,#00ffae 186.5px,#00ff9a 201.5px,#00ff4a 250.5px,#00ff56 260.5px,#00ff66 315.5px,#00ff76 322.5px)"></i><i style="top:186px;height:1px;background:linear-gradient(90deg,#1eff00 0.5px,#faff00 30.5px,#ffe400 34.5px,#ff3c00 57.5px,#ff3800 59.5px,#ff4400 64.5px,#fffc00 78.5px,#02ff00 97.5px,#00fffe 116.5px,#00b0ff 122.5px,#00fffe 156.5px,#00ffae 188.5px,#00ffa6 196.5px,#00ff4a 252.5px,#00ff56 259.5px,#00ff66 316.5px,#00ff76 322.5px)"></i><i style="top:187px;height:1px;background:linear-gradient(90deg,#1eff00 0.5px,#feff00 30.5px,#ff3400 58.5px,#ff3000 60.5px,#ff3800 64.5px,#feff00 79.5px,#00ff02 98.5px,#00fffe 117.5px,#00b0ff 123.5px,#00b8ff 128.5px,#00fffe 157.5px,#00ffb2 189.5px,#00ff6e 232.5px,#00ff4e 253.5px,#00ff56 260.5px,#00ff6a 319.5px,#00ff72 322.5px)"></i><i style="top:188px;height:1px;background:linear-gradient(90deg,#22ff00 0.5px,#feff00 30.5px,#ff2800 59.5px,#ff2c00 64.5px,#fff400 79.5px,#faff00 80.5px,#0aff00 98.5px,#00ff02 99.5px,#00fff6 117.5px,#00fcff 118.5px,#00acff 124.5px,#00b0ff 127.5px,#00fffe 160.5px,#00ffb6 189.5px,#00ff4e 254.5px,#00ff56 259.5px,#00ff6a 319.5px,#00ff72 322.5px)"></i><i style="top:189px;height:1px;background:linear-gradient(90deg,#22ff00 0.5px,#feff00 30.5px,#ff1c00 61.5px,#ff2400 64.5px,#fff800 80.5px,#faff00 81.5px,#06ff00 99.5px,#00ff12 101.5px,#00fff6 118.5px,#00f8ff 119.5px,#00a8ff 125.5px,#00fffe 162.5px,#00ffb6 191.5px,#00ffa2 205.5px,#00ff52 254.5px,#00ff5a 267.5px,#00ff6a 320.5px,#00ff6e 322.5px)"></i><i style="top:190px;height:1px;background:linear-gradient(90deg,#22ff00 0.5px,#fffc00 30.5px,#ff1800 61.5px,#ff1400 62.5px,#ff1800 64.5px,#fffc00 81.5px,#ceff00 85.5px,#06ff00 100.5px,#00ff22 103.5px,#00fffa 119.5px,#00f8ff 120.5px,#00a8ff 126.5px,#00a4ff 127.5px,#00fffe 164.5px,#00ffba 192.5px,#00ff52 256.5px,#00ff5a 263.5px,#00ff6a 321.5px,#00ff6e 322.5px)"></i><i style="top:191px;height:1px;background:linear-gradient(90deg,#26ff00 0.5px,#faff00 29.5px,#ffe400 33.5px,#ff1000 62.5px,#ff0c00 64.5px,#fffc00 82.5px,#02ff00 101.5px,#00fffe 120.5px,#00a4ff 127.5px,#00a8ff 130.5px,#00fffe 166.5px,#00ffba 194.5px,#00ff56 257.5px,#00ff6a 322.5px)"></i><i style="top:192px;height:1px;background:linear-gradient(90deg,#26ff00 0.5px,#feff00 29.5px,#ffe400 33.5px,#ff0800 63.5px,#ff0400 64.5px,#feff00 83.5px,#00ff02 102.5px,#00fffe 121.5px,#00a0ff 128.5px,#00fffe 168.5px,#00ffba 196.5px,#00ff56 257.5px,#00ff6a 322.5px)"></i></div>

<!-- colorbar & axes -->
<div class="a" style="left:411px;top:514px;width:183px;height:21px;background:linear-gradient(90deg,#0000ff 0.00px,#0000ff 2.86px,#0010ff 2.86px,#0010ff 5.72px,#0020ff 5.72px,#0020ff 8.58px,#0031ff 8.58px,#0031ff 11.44px,#0041ff 11.44px,#0041ff 14.30px,#0051ff 14.30px,#0051ff 17.16px,#0061ff 17.16px,#0061ff 20.02px,#0071ff 20.02px,#0071ff 22.88px,#0082ff 22.88px,#0082ff 25.73px,#0092ff 25.73px,#0092ff 28.59px,#00a2ff 28.59px,#00a2ff 31.45px,#00b2ff 31.45px,#00b2ff 34.31px,#00c2ff 34.31px,#00c2ff 37.17px,#00d2ff 37.17px,#00d2ff 40.03px,#00e3ff 40.03px,#00e3ff 42.89px,#00f3ff 42.89px,#00f3ff 45.75px,#00fffb 45.75px,#00fffb 48.61px,#00ffeb 48.61px,#00ffeb 51.47px,#00ffdb 51.47px,#00ffdb 54.33px,#00ffca 54.33px,#00ffca 57.19px,#00ffba 57.19px,#00ffba 60.05px,#00ffaa 60.05px,#00ffaa 62.91px,#00ff9a 62.91px,#00ff9a 65.77px,#00ff8a 65.77px,#00ff8a 68.62px,#00ff79 68.62px,#00ff79 71.48px,#00ff69 71.48px,#00ff69 74.34px,#00ff59 74.34px,#00ff59 77.20px,#00ff49 77.20px,#00ff49 80.06px,#00ff39 80.06px,#00ff39 82.92px,#00ff28 82.92px,#00ff28 85.78px,#00ff18 85.78px,#00ff18 88.64px,#00ff08 88.64px,#00ff08 91.50px,#08ff00 91.50px,#08ff00 94.36px,#18ff00 94.36px,#18ff00 97.22px,#28ff00 97.22px,#28ff00 100.08px,#39ff00 100.08px,#39ff00 102.94px,#49ff00 102.94px,#49ff00 105.80px,#59ff00 105.80px,#59ff00 108.66px,#69ff00 108.66px,#69ff00 111.52px,#79ff00 111.52px,#79ff00 114.38px,#8aff00 114.38px,#8aff00 117.23px,#9aff00 117.23px,#9aff00 120.09px,#aaff00 120.09px,#aaff00 122.95px,#baff00 122.95px,#baff00 125.81px,#caff00 125.81px,#caff00 128.67px,#dbff00 128.67px,#dbff00 131.53px,#ebff00 131.53px,#ebff00 134.39px,#fbff00 134.39px,#fbff00 137.25px,#fff300 137.25px,#fff300 140.11px,#ffe300 140.11px,#ffe300 142.97px,#ffd200 142.97px,#ffd200 145.83px,#ffc200 145.83px,#ffc200 148.69px,#ffb200 148.69px,#ffb200 151.55px,#ffa200 151.55px,#ffa200 154.41px,#ff9200 154.41px,#ff9200 157.27px,#ff8200 157.27px,#ff8200 160.12px,#ff7100 160.12px,#ff7100 162.98px,#ff6100 162.98px,#ff6100 165.84px,#ff5100 165.84px,#ff5100 168.70px,#ff4100 168.70px,#ff4100 171.56px,#ff3100 171.56px,#ff3100 174.42px,#ff2000 174.42px,#ff2000 177.28px,#ff1000 177.28px,#ff1000 180.14px,#ff0000 180.14px,#ff0000 183.00px)"></div>
<div class="t" style="left:397px;top:502px;font-size:11.5px;color:#fff">-13.0</div>
<div class="t" style="left:445px;top:502px;font-size:11.5px;color:#fff">1.50</div>
<div class="t" style="left:490px;top:502px;font-size:11.5px;color:#fff">16.0</div>
<div class="t" style="left:534px;top:502px;font-size:11.5px;color:#fff">30.5</div>
<div class="t" style="left:580px;top:502px;font-size:11.5px;color:#fff">45.0</div>
<div class="t" style="left:496px;top:487px;font-size:14px;color:#fff">A</div>
<svg class="a" style="left:345px;top:492px" width="50" height="40" viewBox="0 0 50 40">
<path d="M11 8V33" stroke="#ffff00" stroke-width="1.5"/>
<path d="M9 13L11 7.5L13 13Z" fill="#ffff00"/>
<path d="M14 34.5H37" stroke="#ff0000" stroke-width="1.5"/>
<path d="M33 32.5L38.5 34.5L33 36.5Z" fill="#ff0000"/>
<path d="M14 34.5H18" stroke="#fff" stroke-width="1"/>
<circle cx="11.4" cy="34.4" r="2.6" fill="#006400"/>
<path d="M12.5 7.5L15 10.5L18 7.5M15 10.5V11" stroke="#fff" stroke-width="1" fill="none"/>
<path d="M13.5 28.5H17.5L13.5 33.5H17.5" stroke="#fff" stroke-width="1" fill="none"/>
<path d="M35 29L39 34.5M39 29L35 34.5" stroke="#fff" stroke-width="1" fill="none"/>
</svg>
</body></html>
